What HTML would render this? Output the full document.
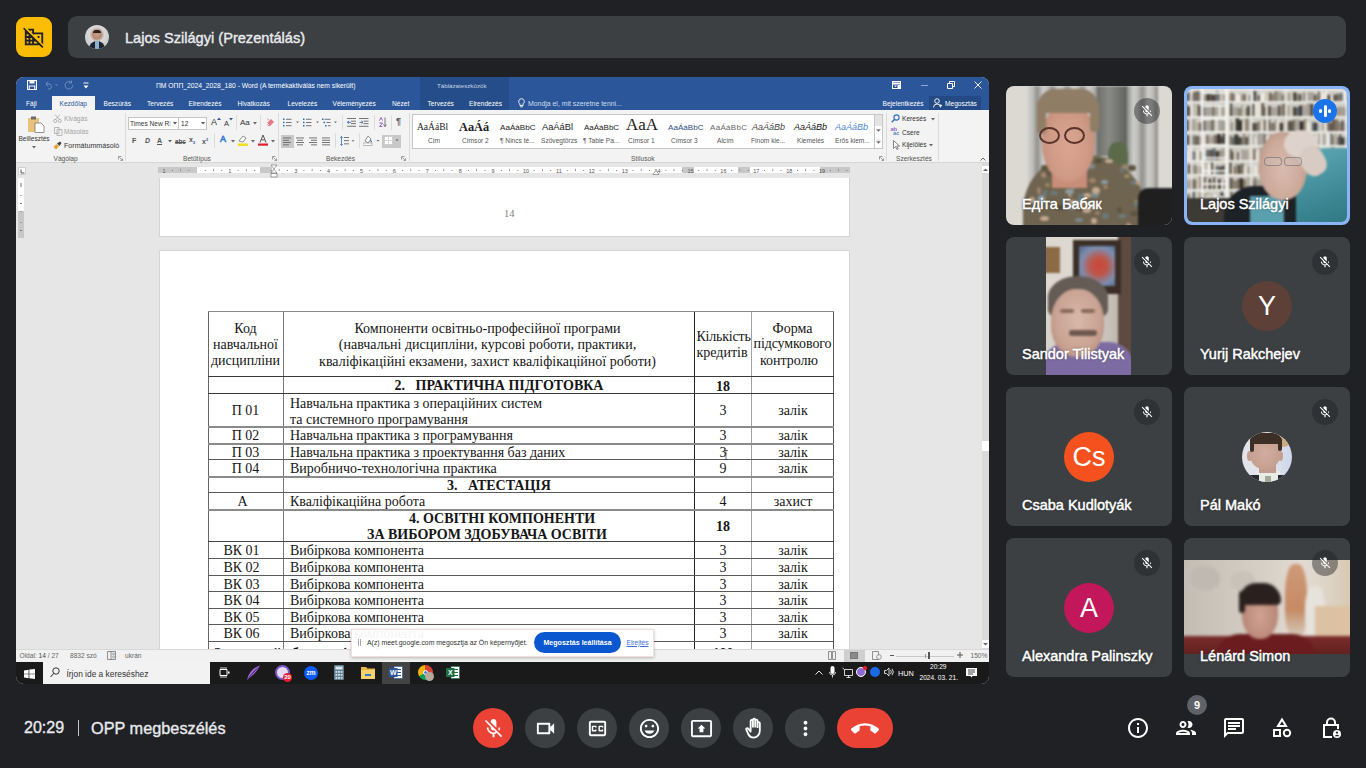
<!DOCTYPE html>
<html><head><meta charset="utf-8">
<style>
*{margin:0;padding:0;box-sizing:border-box}
html,body{width:1366px;height:768px;overflow:hidden;background:#202124;font-family:"Liberation Sans",sans-serif}
.a{position:absolute}
#ybox{left:16px;top:17px;width:36px;height:40px;background:#fbbc04;border-radius:9px}
#pbar{left:68px;top:16px;width:1278px;height:42px;background:#3c4043;border-radius:9px}
#pname{left:125px;top:30px;color:#e8eaed;font-size:14.6px;font-weight:normal;-webkit-text-stroke:0.4px #e8eaed;line-height:16px;white-space:nowrap}
#word{left:16px;top:77px;width:973px;height:607px;background:#e6e6e6;border-radius:8px 8px 8px 8px;overflow:hidden}
.wt{font-size:6.6px;line-height:8px;white-space:nowrap}
.rb{color:#333}
.rg{color:#555}
.ds{font-family:"Liberation Serif",serif;font-size:14px;line-height:16px;color:#161616;white-space:nowrap}
.st{font-family:"Liberation Serif",serif;color:#222;line-height:14px;white-space:nowrap}
.tile{width:166px;background:#3c4043;border-radius:8px;overflow:hidden}
.tname{position:absolute;color:#fff;font-size:14.5px;font-weight:normal;-webkit-text-stroke:0.45px #fff;left:16px;top:110px;line-height:16px;white-space:nowrap;text-shadow:0 0 3px rgba(0,0,0,.45)}
.mute{position:absolute;width:26px;height:26px;border-radius:50%;background:rgba(32,33,36,.45);right:12px;top:12px}
.mute svg{position:absolute;left:6px;top:6px;width:14px;height:14px}
.av{position:absolute;width:50px;height:50px;border-radius:50%;left:58px;top:44px;color:#fff;text-align:center;line-height:50px;font-size:27px}
.mbtn{position:absolute;top:708px;width:40px;height:40px;border-radius:20px;background:#3c4043}
.mbtn svg{position:absolute;left:8.5px;top:8.5px;width:23px;height:23px}
.ricon{position:absolute;top:716px;width:24px;height:24px}
</style></head><body>
<div id="ybox" class="a">
<svg class="a" style="left:7px;top:9px" width="22" height="22" viewBox="0 0 24 24"><path fill="#202124" d="M8 5h2v2h-.9L12 9.9V9h8v8.9l2 2V7H12V3H5.1L8 5.9zm8 6h2v2h-2zM1.3 1.8L.1 3.1 2 5v16h16l3 3 1.3-1.3L1.3 1.8zM6 19H4v-2h2v2zm0-4H4v-2h2v2zm0-4H4V9h2v2zm4 8H8v-2h2v2zm-2-4v-2h2v2H8zm4 4v-2h2l2 2h-4z"/></svg>
</div>
<div id="pbar" class="a">
<div class="a" style="left:17px;top:9px;width:24px;height:24px;border-radius:50%;background:radial-gradient(circle at 50% 40%,#c9a089 0,#b68a74 22%,#d9d9d9 40%,#cfcfcf 60%);overflow:hidden">
<div class="a" style="left:4px;top:16px;width:16px;height:10px;border-radius:8px 8px 0 0;background:#1f2530"></div>
<div class="a" style="left:10px;top:16px;width:4px;height:8px;background:#8fb1d0"></div>
<div class="a" style="left:8px;top:5px;width:8px;height:3px;border-radius:4px 4px 0 0;background:#2a2220"></div>
</div>
</div>
<div id="pname" class="a">Lajos Szilágyi (Prezentálás)</div>

<div id="word" class="a"><div class="a" id="wg" style="left:-16px;top:-77px;width:1366px;height:768px">
<!-- title + tabs -->
<div class="a" style="left:16px;top:77px;width:973px;height:33px;background:#2b579a"></div>
<div class="a" style="left:420px;top:77px;width:89px;height:33px;background:#254d89"></div>
<div class="a wt" style="left:156px;top:82px;font-size:6.75px;color:#fff">ПМ ОПП_2024_2028_180 - Word (A termékaktiválás nem sikerült)</div>
<div class="a wt" style="left:437px;top:82px;font-size:6.2px;color:#c5d3e8">Táblázateszközök</div>
<!-- QAT -->
<svg class="a" style="left:27px;top:80px" width="10" height="10" viewBox="0 0 10 10"><path d="M0.5 0.5h9v9h-9z" fill="none" stroke="#fff" stroke-width="1.2"/><rect x="2.5" y="0.5" width="5" height="3" fill="#fff"/><rect x="2.3" y="6" width="5.4" height="3.5" fill="none" stroke="#fff" stroke-width="1"/></svg>
<svg class="a" style="left:44px;top:80px" width="16" height="10" viewBox="0 0 16 10"><path d="M2 4h4a3 3 0 0 1 0 5H4 M2 4l2-2.5 M2 4l2 2.5" fill="none" stroke="#6d8cbf" stroke-width="1"/><path d="M11 4.5l1.5 1.5 1.5-1.5" fill="#6d8cbf"/></svg>
<svg class="a" style="left:64px;top:80px" width="10" height="10" viewBox="0 0 10 10"><path d="M7.5 2.5A3.8 3.8 0 1 0 8.7 5 M7.5 0.5v2.5h-2.5" fill="none" stroke="#6d8cbf" stroke-width="1"/></svg>
<svg class="a" style="left:83px;top:82px" width="6" height="8" viewBox="0 0 6 8"><path d="M0.5 1h5" stroke="#fff" stroke-width="1"/><path d="M0.5 3.5h5l-2.5 3z" fill="#fff"/></svg>
<!-- window buttons -->
<svg class="a" style="left:892px;top:81px" width="9" height="8" viewBox="0 0 9 8"><rect x="0.5" y="0.5" width="8" height="7" fill="none" stroke="#fff" stroke-width="1"/><path d="M1 1.5h7v2h-7z M2 4.5l1.5 1.5 1.5-1.5z M5.5 4h2.5v3h-2.5z" fill="#fff"/></svg>
<div class="a" style="left:921px;top:85px;width:7px;height:1px;background:#8ea8d2"></div>
<svg class="a" style="left:947px;top:81px" width="8" height="8" viewBox="0 0 8 8"><path d="M0.5 2.5h5v5h-5z M2.5 2.5V0.5h5v5h-2" fill="none" stroke="#fff" stroke-width="1"/></svg>
<svg class="a" style="left:974px;top:81px" width="8" height="8" viewBox="0 0 8 8"><path d="M0.5 0.5l7 7 M7.5 0.5l-7 7" stroke="#fff" stroke-width="0.9"/></svg>
<!-- tabs -->
<div class="a" style="left:51.5px;top:96px;width:43.5px;height:14px;background:#f3f3f3"></div>
<div class="a" style="left:929px;top:96px;width:52px;height:14px;background:#234a85"></div>
<div class="a wt" style="left:26px;top:99.5px;color:#fff">Fájl</div>
<div class="a wt" style="left:59.5px;top:99.5px;color:#2b579a">Kezdőlap</div>
<div class="a wt" style="left:103.5px;top:99.5px;color:#fff">Beszúrás</div>
<div class="a wt" style="left:147px;top:99.5px;color:#fff">Tervezés</div>
<div class="a wt" style="left:188.5px;top:99.5px;color:#fff">Elrendezés</div>
<div class="a wt" style="left:237.5px;top:99.5px;color:#fff">Hivatkozás</div>
<div class="a wt" style="left:287.5px;top:99.5px;color:#fff">Levelezés</div>
<div class="a wt" style="left:332.5px;top:99.5px;color:#fff">Véleményezés</div>
<div class="a wt" style="left:392px;top:99.5px;color:#fff">Nézet</div>
<div class="a wt" style="left:427.5px;top:99.5px;color:#fff">Tervezés</div>
<div class="a wt" style="left:469px;top:99.5px;color:#fff">Elrendezés</div>
<svg class="a" style="left:518px;top:98px" width="7" height="10" viewBox="0 0 7 10"><path d="M3.5 0.7a2.8 2.8 0 0 0-1.6 5.1v1.7h3.2V5.8A2.8 2.8 0 0 0 3.5 0.7z M2.2 8.8h2.6" fill="none" stroke="#fff" stroke-width="0.9"/></svg>
<div class="a wt" style="left:528px;top:99.5px;color:#d0dcee;font-size:6.9px">Mondja el, mit szeretne tenni...</div>
<div class="a wt" style="left:882.5px;top:99.5px;color:#fff">Bejelentkezés</div>
<svg class="a" style="left:933px;top:98px" width="9" height="10" viewBox="0 0 9 10"><circle cx="4" cy="3" r="2.3" fill="none" stroke="#fff" stroke-width="0.9"/><path d="M0.5 9.5a3.5 3.5 0 0 1 7 0 M6.5 7.5h2.5 M7.75 6.3v2.5" fill="none" stroke="#fff" stroke-width="0.9"/></svg>
<div class="a wt" style="left:945px;top:99.5px;color:#fff">Megosztás</div>

<!-- ribbon -->
<div class="a" style="left:16px;top:110px;width:973px;height:53px;background:#f3f3f3;border-bottom:1px solid #d6d6d6"></div>
<!-- Clipboard group -->
<svg class="a" style="left:27px;top:115px" width="18" height="18" viewBox="0 0 18 18"><path d="M1 3h11v14H1z" fill="#e8c27a"/><path d="M4 1.5h5v3H4z" fill="#6b6b6b"/><path d="M8 8h6l3 3v6.5H8z" fill="#fff" stroke="#777" stroke-width="0.8"/></svg>
<div class="a wt rb" style="left:18.5px;top:134.5px;font-size:6.5px">Beillesztés</div>
<svg class="a" style="left:32px;top:146px" width="4" height="3" viewBox="0 0 4 3"><path d="M0 0h4l-2 2.5z" fill="#666"/></svg>
<svg class="a" style="left:53px;top:114px" width="9" height="9" viewBox="0 0 9 9"><circle cx="2.2" cy="7" r="1.6" fill="none" stroke="#aaa" stroke-width="0.8"/><circle cx="6.8" cy="7" r="1.6" fill="none" stroke="#aaa" stroke-width="0.8"/><path d="M2 0.5l5 5.5 M7 0.5l-5 5.5" stroke="#aaa" stroke-width="0.8"/></svg>
<div class="a wt" style="left:64px;top:115px;color:#a3a3a3">Kivágás</div>
<svg class="a" style="left:54px;top:127px" width="9" height="9" viewBox="0 0 9 9"><path d="M0.5 0.5h4.5v6h-4.5z M3 2.5h5v6H3z" fill="#f3f3f3" stroke="#aaa" stroke-width="0.8"/></svg>
<div class="a wt" style="left:64px;top:128px;color:#a3a3a3">Másolás</div>
<svg class="a" style="left:53px;top:141px" width="9" height="9" viewBox="0 0 9 9"><path d="M0.5 6l3-3 2.5 2.5-3 3z" fill="#e4a23a"/><path d="M4 2.5l3-2 1.5 1.5-2 3z" fill="#444"/></svg>
<div class="a wt rb" style="left:64px;top:141.5px;font-size:7.1px">Formátummásoló</div>
<div class="a wt rg" style="left:53.5px;top:155px">Vágólap</div>
<svg class="a" style="left:118px;top:156px" width="5" height="5" viewBox="0 0 5 5"><path d="M0.5 0.5h3 M0.5 0.5v3 M1.5 1.5l3 3 M4.5 2.5v2h-2" fill="none" stroke="#777" stroke-width="0.7"/></svg>
<div class="a" style="left:125px;top:113px;width:1px;height:48px;background:#dcdcdc"></div>

<!-- Font group -->
<div class="a" style="left:128px;top:117px;width:51px;height:13px;background:#fff;border:1px solid #c6c6c6"></div>
<div class="a wt rb" style="left:130px;top:119.5px;font-size:6.6px;color:#333">Times New R<span style="color:#999">i</span></div>
<svg class="a" style="left:173px;top:122px" width="4" height="3" viewBox="0 0 4 3"><path d="M0 0h4l-2 2.5z" fill="#555"/></svg>
<div class="a" style="left:178px;top:117px;width:29px;height:13px;background:#fff;border:1px solid #c6c6c6"></div>
<div class="a wt rb" style="left:181px;top:119.5px;font-size:6.6px;color:#333">12</div>
<svg class="a" style="left:201px;top:122px" width="4" height="3" viewBox="0 0 4 3"><path d="M0 0h4l-2 2.5z" fill="#555"/></svg>
<div class="a wt rb" style="left:211px;top:118px;font-size:9px">A</div><svg class="a" style="left:217px;top:117px" width="4" height="3" viewBox="0 0 4 3"><path d="M0 3h4l-2-2.5z" fill="#2b579a"/></svg>
<div class="a wt rb" style="left:224px;top:120px;font-size:7.5px">A</div><svg class="a" style="left:229px;top:118px" width="4" height="3" viewBox="0 0 4 3"><path d="M0 0h4l-2 2.5z" fill="#2b579a"/></svg>
<div class="a" style="left:236px;top:115px;width:1px;height:15px;background:#dcdcdc"></div>
<div class="a wt rb" style="left:240px;top:119px;font-size:8px">Aa</div>
<svg class="a" style="left:253px;top:122px" width="4" height="3" viewBox="0 0 4 3"><path d="M0 0h4l-2 2.5z" fill="#666"/></svg>
<div class="a" style="left:260px;top:115px;width:1px;height:15px;background:#dcdcdc"></div>
<svg class="a" style="left:266px;top:118px" width="9" height="9" viewBox="0 0 9 9"><path d="M1 5l4-4 3 3-4 4H2z" fill="#e8778a"/><path d="M1 5l2 2" stroke="#fff" stroke-width="0.8"/><path d="M1.5 0.5l1 1.5" stroke="#666" stroke-width="0.6"/></svg>
<div class="a wt" style="left:132px;top:137px;font-size:7px;font-weight:bold;color:#555">F</div>
<div class="a wt" style="left:145px;top:137px;font-size:7px;font-weight:bold;font-style:italic;color:#555">D</div>
<div class="a wt" style="left:157px;top:137px;font-size:7px;font-weight:bold;color:#555;text-decoration:underline">A</div>
<svg class="a" style="left:168px;top:140px" width="4" height="3" viewBox="0 0 4 3"><path d="M0 0h4l-2 2.5z" fill="#666"/></svg>
<div class="a wt" style="left:175px;top:137.5px;font-size:6.3px;font-weight:bold;color:#555;text-decoration:line-through">abc</div>
<div class="a wt" style="left:189px;top:136px;font-size:7px;font-weight:bold;color:#555">x<sub style="font-size:4px;color:#2b579a">2</sub></div>
<div class="a wt" style="left:202px;top:136px;font-size:7px;font-weight:bold;color:#555">x<sup style="font-size:4px;color:#2b579a">2</sup></div>
<div class="a" style="left:214px;top:133px;width:1px;height:15px;background:#dcdcdc"></div>
<div class="a wt" style="left:220px;top:134.5px;font-size:9px;color:#fff;-webkit-text-stroke:0.7px #3a7bd5">A</div>
<svg class="a" style="left:231px;top:140px" width="4" height="3" viewBox="0 0 4 3"><path d="M0 0h4l-2 2.5z" fill="#666"/></svg>
<svg class="a" style="left:238px;top:135px" width="10" height="11" viewBox="0 0 10 11"><path d="M1 6l4-5 3 2-3 4z" fill="#fff" stroke="#666" stroke-width="0.7"/><rect x="0" y="8.5" width="10" height="2.5" fill="#f0e020"/></svg>
<svg class="a" style="left:251px;top:140px" width="4" height="3" viewBox="0 0 4 3"><path d="M0 0h4l-2 2.5z" fill="#666"/></svg>
<svg class="a" style="left:258px;top:134px" width="10" height="12" viewBox="0 0 10 12"><path d="M2 8.5L5 1l3 7.5 M3.2 5.8h3.6" fill="none" stroke="#555" stroke-width="1"/><rect x="0" y="9.5" width="10" height="2.2" fill="#e0202a"/></svg>
<svg class="a" style="left:271px;top:140px" width="4" height="3" viewBox="0 0 4 3"><path d="M0 0h4l-2 2.5z" fill="#666"/></svg>
<div class="a wt rg" style="left:183px;top:155px">Betűtípus</div>
<svg class="a" style="left:272px;top:156px" width="5" height="5" viewBox="0 0 5 5"><path d="M0.5 0.5h3 M0.5 0.5v3 M1.5 1.5l3 3 M4.5 2.5v2h-2" fill="none" stroke="#777" stroke-width="0.7"/></svg>
<div class="a" style="left:278px;top:113px;width:1px;height:48px;background:#dcdcdc"></div>

<!-- Paragraph group -->
<svg class="a" style="left:283px;top:118px" width="60" height="9" viewBox="0 0 60 9"><g fill="#2b6cc4"><rect x="0" y="0.5" width="1.5" height="1.5"/><rect x="0" y="3.7" width="1.5" height="1.5"/><rect x="0" y="7" width="1.5" height="1.5"/><rect x="20" y="0.5" width="1.5" height="1.5"/><rect x="20" y="3.7" width="1.5" height="1.5"/><rect x="20" y="7" width="1.5" height="1.5"/><rect x="39" y="0.5" width="1.5" height="1.5"/><rect x="40.5" y="3.7" width="1.5" height="1.5"/><rect x="42" y="7" width="1.5" height="1.5"/></g><g fill="#666"><rect x="3" y="0.8" width="5.5" height="0.9"/><rect x="3" y="4" width="5.5" height="0.9"/><rect x="3" y="7.3" width="5.5" height="0.9"/><rect x="23" y="0.8" width="5.5" height="0.9"/><rect x="23" y="4" width="5.5" height="0.9"/><rect x="23" y="7.3" width="5.5" height="0.9"/><rect x="41.5" y="0.8" width="6" height="0.9"/><rect x="43.5" y="4" width="4" height="0.9"/><rect x="45" y="7.3" width="2.5" height="0.9"/><path d="M13 3.5h3l-1.5 1.5z M33 3.5h3l-1.5 1.5z M51 3.5h3l-1.5 1.5z"/></g></svg>
<div class="a" style="left:342px;top:115px;width:1px;height:15px;background:#dcdcdc"></div>
<svg class="a" style="left:347px;top:118px" width="23" height="9" viewBox="0 0 23 9"><g fill="#666"><rect x="0" y="0" width="9" height="0.9"/><rect x="4" y="2.7" width="5" height="0.9"/><rect x="4" y="5.2" width="5" height="0.9"/><rect x="0" y="7.8" width="9" height="0.9"/><rect x="12" y="0" width="9.5" height="0.9"/><rect x="16.5" y="2.7" width="5" height="0.9"/><rect x="16.5" y="5.2" width="5" height="0.9"/><rect x="12" y="7.8" width="9.5" height="0.9"/></g><path d="M0.5 4.3h3.5 M0.5 4.3l1.5-1.3 M0.5 4.3l1.5 1.3 M12.5 4.3h3.5 M16 4.3l-1.5-1.3 M16 4.3l-1.5 1.3" stroke="#2b6cc4" stroke-width="0.9" fill="none"/></svg>
<div class="a" style="left:374px;top:115px;width:1px;height:15px;background:#dcdcdc"></div>
<svg class="a" style="left:379px;top:117px" width="8" height="10" viewBox="0 0 8 10"><path d="M0.5 3.5l1.5-3 1.5 3 M0.5 6h3l-3 3.5h3" fill="none" stroke="#7b3fb5" stroke-width="0.8"/><path d="M6 0.5v9 M4.5 7.5l1.5 2 1.5-2" fill="none" stroke="#555" stroke-width="0.8"/></svg>
<div class="a" style="left:391px;top:115px;width:1px;height:15px;background:#dcdcdc"></div>
<div class="a wt" style="left:396px;top:116.5px;font-size:9px;color:#555;font-weight:bold">¶</div>
<div class="a" style="left:281px;top:135px;width:13px;height:13px;background:#c8c8c8"></div>
<svg class="a" style="left:283px;top:137px" width="50" height="9" viewBox="0 0 50 9"><g fill="#666"><rect x="0" y="0.5" width="8" height="0.9"/><rect x="0" y="2.8" width="6" height="0.9"/><rect x="0" y="5.1" width="8" height="0.9"/><rect x="0" y="7.4" width="6" height="0.9"/><rect x="13" y="0.5" width="8" height="0.9"/><rect x="14" y="2.8" width="6" height="0.9"/><rect x="13" y="5.1" width="8" height="0.9"/><rect x="14" y="7.4" width="6" height="0.9"/><rect x="26" y="0.5" width="8" height="0.9"/><rect x="28" y="2.8" width="6" height="0.9"/><rect x="26" y="5.1" width="8" height="0.9"/><rect x="28" y="7.4" width="6" height="0.9"/><rect x="39" y="0.5" width="8" height="0.9"/><rect x="39" y="2.8" width="8" height="0.9"/><rect x="39" y="5.1" width="8" height="0.9"/><rect x="39" y="7.4" width="8" height="0.9"/></g></svg>
<div class="a" style="left:335px;top:133px;width:1px;height:15px;background:#dcdcdc"></div>
<svg class="a" style="left:340px;top:136px" width="16" height="10" viewBox="0 0 16 10"><path d="M1.5 0.5v9 M0.3 1.8l1.2-1.3 1.2 1.3 M0.3 8.2l1.2 1.3 1.2-1.3" fill="none" stroke="#2b6cc4" stroke-width="0.8"/><g fill="#666"><rect x="4" y="1" width="5" height="0.9"/><rect x="4" y="4.2" width="5" height="0.9"/><rect x="4" y="7.4" width="5" height="0.9"/><path d="M11.5 4.3h3l-1.5 1.5z"/></g></svg>
<div class="a" style="left:359px;top:133px;width:1px;height:15px;background:#dcdcdc"></div>
<svg class="a" style="left:363px;top:135px" width="18" height="11" viewBox="0 0 18 11"><path d="M2 6l3-5 3 3-3 4z" fill="#fff" stroke="#666" stroke-width="0.7"/><path d="M7 4.5l2 1.5-1 2" fill="#2b6cc4"/><rect x="0" y="8" width="9" height="2.5" fill="#fff" stroke="#888" stroke-width="0.6"/><path d="M13.5 5h3l-1.5 1.5z" fill="#666"/></svg>
<div class="a" style="left:382px;top:135px;width:19px;height:13px;background:#c8c8c8"></div>
<svg class="a" style="left:384px;top:136px" width="16" height="10" viewBox="0 0 16 10"><rect x="0.5" y="0.5" width="8" height="8" fill="#fff" stroke="#bbb" stroke-width="0.5"/><path d="M4.5 0.5v8 M0.5 4.5h8" stroke="#c8c8c8" stroke-width="0.7"/><path d="M11.5 3.5h3l-1.5 1.5z" fill="#555"/></svg>
<div class="a wt rg" style="left:326px;top:155px">Bekezdés</div>
<svg class="a" style="left:401px;top:156px" width="5" height="5" viewBox="0 0 5 5"><path d="M0.5 0.5h3 M0.5 0.5v3 M1.5 1.5l3 3 M4.5 2.5v2h-2" fill="none" stroke="#777" stroke-width="0.7"/></svg>
<div class="a" style="left:409px;top:113px;width:1px;height:48px;background:#dcdcdc"></div>

<!-- Styles gallery -->
<div class="a" style="left:412px;top:114px;width:471px;height:35px;background:#fff;border:1px solid #c6c6c6"></div>
<div class="a st" style="left:417px;top:120px;font-size:9.5px">AaÁáBl</div>
<div class="a st" style="left:459px;top:120px;font-size:12.3px;font-weight:bold">AaÁá</div>
<div class="a st" style="left:500px;top:121px;font-size:8.1px;font-family:'Liberation Sans',sans-serif">AaÁáBbC</div>
<div class="a st" style="left:542px;top:120px;font-size:9.3px;font-family:'Liberation Sans',sans-serif">AaÁáBl</div>
<div class="a st" style="left:584px;top:121px;font-size:8px;font-family:'Liberation Sans',sans-serif">AaÁáBbC</div>
<div class="a st" style="left:626px;top:118px;font-size:17px">AaA</div>
<div class="a st" style="left:668px;top:121px;font-size:8.1px;font-family:'Liberation Sans',sans-serif;color:#2f4f7f">AaÁáBbC</div>
<div class="a st" style="left:710px;top:121px;font-size:8px;font-family:'Liberation Sans',sans-serif;color:#666;letter-spacing:0.3px">AaÁáBbC</div>
<div class="a st" style="left:752px;top:120px;font-size:9px;font-family:'Liberation Sans',sans-serif;font-style:italic;color:#444">AaÁáBb</div>
<div class="a st" style="left:794px;top:120px;font-size:9px;font-family:'Liberation Sans',sans-serif;font-style:italic;color:#111">AaÁáBb</div>
<div class="a st" style="left:835px;top:120px;font-size:9px;font-family:'Liberation Sans',sans-serif;font-style:italic;color:#4a86d0">AaÁáBb</div>
<div class="a wt rg" style="left:428px;top:137px">Cím</div>
<div class="a wt rg" style="left:462px;top:137px">Címsor 2</div>
<div class="a wt rg" style="left:500px;top:137px">¶ Nincs té...</div>
<div class="a wt rg" style="left:541px;top:137px">Szövegtörzs</div>
<div class="a wt rg" style="left:583px;top:137px">¶ Table Pa...</div>
<div class="a wt rg" style="left:628px;top:137px">Címsor 1</div>
<div class="a wt rg" style="left:671px;top:137px">Címsor 3</div>
<div class="a wt rg" style="left:717px;top:137px">Alcím</div>
<div class="a wt rg" style="left:751px;top:137px">Finom kie...</div>
<div class="a wt rg" style="left:797px;top:137px">Kiemelés</div>
<div class="a wt rg" style="left:835px;top:137px">Erős kiem...</div>
<div class="a" style="left:874px;top:114px;width:9px;height:35px;background:#fff;border:1px solid #c6c6c6"></div>
<div class="a" style="left:875px;top:115px;width:7px;height:11px;background:#e4e4e4"></div>
<svg class="a" style="left:876px;top:128px" width="5" height="20" viewBox="0 0 5 20"><path d="M0.5 1.5h4l-2 2z M0.5 12h4 M0.5 13.5h4l-2 2z" fill="#666" stroke="#666" stroke-width="0.3"/></svg>
<div class="a wt rg" style="left:631px;top:155px">Stílusok</div>
<svg class="a" style="left:879px;top:156px" width="5" height="5" viewBox="0 0 5 5"><path d="M0.5 0.5h3 M0.5 0.5v3 M1.5 1.5l3 3 M4.5 2.5v2h-2" fill="none" stroke="#777" stroke-width="0.7"/></svg>
<div class="a" style="left:886px;top:113px;width:1px;height:48px;background:#dcdcdc"></div>

<!-- Editing group -->
<svg class="a" style="left:891px;top:114px" width="9" height="9" viewBox="0 0 9 9"><circle cx="5.5" cy="3.5" r="2.6" fill="none" stroke="#2b6cc4" stroke-width="1.1"/><path d="M3.5 5.5L0.7 8.3" stroke="#2b6cc4" stroke-width="1.3"/></svg>
<div class="a wt rb" style="left:902px;top:115px">Keresés</div>
<svg class="a" style="left:931px;top:118px" width="4" height="3" viewBox="0 0 4 3"><path d="M0 0h4l-2 2.5z" fill="#666"/></svg>
<div class="a wt" style="left:890.5px;top:126px;font-size:6px;color:#7b3fb5;line-height:6px">ab</div>
<div class="a wt" style="left:893px;top:130px;font-size:6px;color:#2b6cc4;line-height:6px">ac</div>
<div class="a wt rb" style="left:902px;top:128.5px">Csere</div>
<svg class="a" style="left:893px;top:140px" width="7" height="10" viewBox="0 0 7 10"><path d="M0.5 0.5v8l2-2 1.5 3 1.2-0.5-1.5-3h2.8z" fill="#fff" stroke="#555" stroke-width="0.7"/></svg>
<div class="a wt rb" style="left:902px;top:141px">Kijelölés</div>
<svg class="a" style="left:929px;top:144px" width="4" height="3" viewBox="0 0 4 3"><path d="M0 0h4l-2 2.5z" fill="#666"/></svg>
<div class="a wt rg" style="left:896px;top:155px">Szerkesztés</div>
<div class="a" style="left:938px;top:113px;width:1px;height:48px;background:#dcdcdc"></div>
<svg class="a" style="left:980px;top:157px" width="6" height="4" viewBox="0 0 6 4"><path d="M0.5 3.5L3 1l2.5 2.5" fill="none" stroke="#555" stroke-width="0.9"/></svg>

<!-- ruler -->
<div class="a" style="left:17.5px;top:166.5px;width:8.5px;height:8px;background:#fff;border:1px solid #d0d0d0"></div>
<svg class="a" style="left:19.5px;top:168.5px" width="5" height="5" viewBox="0 0 5 5"><path d="M1 0.5v3.5h3.5" fill="none" stroke="#444" stroke-width="0.9"/></svg>
<div class="a" style="left:158px;top:167px;width:692px;height:6px;background:#fff"></div>
<div class="a" style="left:158px;top:167px;width:39px;height:6px;background:#c8c8c8"></div>
<div class="a" style="left:260px;top:167px;width:12px;height:6px;background:#c8c8c8"></div>
<div class="a" style="left:682px;top:167px;width:12px;height:6px;background:#c8c8c8"></div>
<div class="a" style="left:738px;top:167px;width:12px;height:6px;background:#c8c8c8"></div>
<div class="a" style="left:820px;top:167px;width:30px;height:6px;background:#c8c8c8"></div>
<svg class="a" style="left:150px;top:166px" width="700" height="12" viewBox="0 0 700 12" font-family="Liberation Sans" font-size="5.5" fill="#555">
<text x="14.1" y="6.6" text-anchor="middle">1</text>
<rect x="21.9" y="4" width="0.9" height="0.9" fill="#666"/>
<rect x="30.1" y="2.8" width="0.8" height="2.4" fill="#888"/>
<rect x="38.4" y="4" width="0.9" height="0.9" fill="#666"/>
<rect x="54.8" y="4" width="0.9" height="0.9" fill="#666"/>
<rect x="63.0" y="2.8" width="0.8" height="2.4" fill="#888"/>
<rect x="71.3" y="4" width="0.9" height="0.9" fill="#666"/>
<text x="79.9" y="6.6" text-anchor="middle">1</text>
<rect x="87.7" y="4" width="0.9" height="0.9" fill="#666"/>
<rect x="95.9" y="2.8" width="0.8" height="2.4" fill="#888"/>
<rect x="104.2" y="4" width="0.9" height="0.9" fill="#666"/>

<rect x="120.6" y="4" width="0.9" height="0.9" fill="#666"/>
<rect x="128.8" y="2.8" width="0.8" height="2.4" fill="#888"/>
<rect x="137.1" y="4" width="0.9" height="0.9" fill="#666"/>
<text x="145.7" y="6.6" text-anchor="middle">3</text>
<rect x="153.5" y="4" width="0.9" height="0.9" fill="#666"/>
<rect x="161.7" y="2.8" width="0.8" height="2.4" fill="#888"/>
<rect x="170.0" y="4" width="0.9" height="0.9" fill="#666"/>
<text x="178.6" y="6.6" text-anchor="middle">4</text>
<rect x="186.4" y="4" width="0.9" height="0.9" fill="#666"/>
<rect x="194.7" y="2.8" width="0.8" height="2.4" fill="#888"/>
<rect x="202.9" y="4" width="0.9" height="0.9" fill="#666"/>
<text x="211.5" y="6.6" text-anchor="middle">5</text>
<rect x="219.3" y="4" width="0.9" height="0.9" fill="#666"/>
<rect x="227.5" y="2.8" width="0.8" height="2.4" fill="#888"/>
<rect x="235.8" y="4" width="0.9" height="0.9" fill="#666"/>
<text x="244.4" y="6.6" text-anchor="middle">6</text>
<rect x="252.2" y="4" width="0.9" height="0.9" fill="#666"/>
<rect x="260.4" y="2.8" width="0.8" height="2.4" fill="#888"/>
<rect x="268.7" y="4" width="0.9" height="0.9" fill="#666"/>
<text x="277.3" y="6.6" text-anchor="middle">7</text>
<rect x="285.1" y="4" width="0.9" height="0.9" fill="#666"/>
<rect x="293.3" y="2.8" width="0.8" height="2.4" fill="#888"/>
<rect x="301.6" y="4" width="0.9" height="0.9" fill="#666"/>
<text x="310.2" y="6.6" text-anchor="middle">8</text>
<rect x="318.0" y="4" width="0.9" height="0.9" fill="#666"/>
<rect x="326.2" y="2.8" width="0.8" height="2.4" fill="#888"/>
<rect x="334.5" y="4" width="0.9" height="0.9" fill="#666"/>
<text x="343.1" y="6.6" text-anchor="middle">9</text>
<rect x="350.9" y="4" width="0.9" height="0.9" fill="#666"/>
<rect x="359.1" y="2.8" width="0.8" height="2.4" fill="#888"/>
<rect x="367.4" y="4" width="0.9" height="0.9" fill="#666"/>
<text x="376.0" y="6.6" text-anchor="middle">10</text>
<rect x="383.8" y="4" width="0.9" height="0.9" fill="#666"/>
<rect x="392.1" y="2.8" width="0.8" height="2.4" fill="#888"/>
<rect x="400.3" y="4" width="0.9" height="0.9" fill="#666"/>
<text x="408.9" y="6.6" text-anchor="middle">11</text>
<rect x="416.7" y="4" width="0.9" height="0.9" fill="#666"/>
<rect x="425.0" y="2.8" width="0.8" height="2.4" fill="#888"/>
<rect x="433.2" y="4" width="0.9" height="0.9" fill="#666"/>
<text x="441.8" y="6.6" text-anchor="middle">12</text>
<rect x="449.6" y="4" width="0.9" height="0.9" fill="#666"/>
<rect x="457.9" y="2.8" width="0.8" height="2.4" fill="#888"/>
<rect x="466.1" y="4" width="0.9" height="0.9" fill="#666"/>
<text x="474.7" y="6.6" text-anchor="middle">13</text>
<rect x="482.5" y="4" width="0.9" height="0.9" fill="#666"/>
<rect x="490.8" y="2.8" width="0.8" height="2.4" fill="#888"/>
<rect x="499.0" y="4" width="0.9" height="0.9" fill="#666"/>
<text x="507.6" y="6.6" text-anchor="middle">14</text>
<rect x="515.4" y="4" width="0.9" height="0.9" fill="#666"/>
<rect x="523.6" y="2.8" width="0.8" height="2.4" fill="#888"/>
<rect x="531.9" y="4" width="0.9" height="0.9" fill="#666"/>
<text x="540.5" y="6.6" text-anchor="middle">15</text>
<rect x="548.3" y="4" width="0.9" height="0.9" fill="#666"/>
<rect x="556.6" y="2.8" width="0.8" height="2.4" fill="#888"/>
<rect x="564.8" y="4" width="0.9" height="0.9" fill="#666"/>
<text x="573.4" y="6.6" text-anchor="middle">16</text>
<rect x="581.2" y="4" width="0.9" height="0.9" fill="#666"/>
<rect x="589.5" y="2.8" width="0.8" height="2.4" fill="#888"/>
<rect x="597.7" y="4" width="0.9" height="0.9" fill="#666"/>
<text x="606.3" y="6.6" text-anchor="middle">17</text>
<rect x="614.1" y="4" width="0.9" height="0.9" fill="#666"/>
<rect x="622.4" y="2.8" width="0.8" height="2.4" fill="#888"/>
<rect x="630.6" y="4" width="0.9" height="0.9" fill="#666"/>
<text x="639.2" y="6.6" text-anchor="middle">18</text>
<rect x="647.0" y="4" width="0.9" height="0.9" fill="#666"/>
<rect x="655.2" y="2.8" width="0.8" height="2.4" fill="#888"/>
<rect x="663.5" y="4" width="0.9" height="0.9" fill="#666"/>
<text x="672.1" y="6.6" text-anchor="middle">19</text>
<rect x="679.9" y="4" width="0.9" height="0.9" fill="#666"/>
<rect x="688.2" y="2.8" width="0.8" height="2.4" fill="#888"/>
<rect x="696.4" y="4" width="0.9" height="0.9" fill="#666"/>
</svg>
<svg class="a" style="left:270px;top:164px" width="8" height="14" viewBox="0 0 8 14"><path d="M1 1h6l-3 4z M1 9h6l-3-4z" fill="#fff" stroke="#666" stroke-width="0.6"/><rect x="1" y="9.5" width="6" height="3.5" fill="#fff" stroke="#666" stroke-width="0.6"/></svg>
<svg class="a" style="left:652px;top:169px" width="8" height="6" viewBox="0 0 8 6"><path d="M1 5.5h6l-3-4z" fill="#fff" stroke="#666" stroke-width="0.6"/></svg>

<!-- document -->
<div class="a" style="left:16px;top:178px;width:966px;height:471px;background:#e6e6e6"></div>
<div class="a" style="left:18px;top:178px;width:6px;height:33px;background:#fff"></div>
<div class="a" style="left:18px;top:211px;width:6px;height:27px;background:#c8c8c8"></div>
<svg class="a" style="left:18px;top:178px" width="6" height="60" viewBox="0 0 6 60"><g fill="#777"><rect x="2.5" y="5" width="1" height="4"/><rect x="2.5" y="17" width="1" height="1"/><rect x="2" y="25" width="2" height="1"/><rect x="2.5" y="33" width="1" height="1"/><rect x="2.5" y="44" width="1" height="1"/><rect x="2" y="52" width="2" height="1"/></g></svg>

<div class="a" style="left:159px;top:178px;width:691px;height:58.5px;background:#fff;border:1px solid #d4d4d4;border-top:none"></div>
<div class="a" style="left:159px;top:249.5px;width:691px;height:410px;background:#fff;border:1px solid #d4d4d4"></div>
<div class="a ds" style="left:504px;top:205.8px;font-size:10.5px;color:#808080">14</div>
<div class="a" style="left:982px;top:163px;width:7px;height:486px;background:#dadada"></div>
<div class="a" style="left:982px;top:166px;width:7px;height:7px;background:#fff"></div>
<svg class="a" style="left:983px;top:168px" width="5" height="3" viewBox="0 0 5 3"><path d="M0 3h5l-2.5-2.5z" fill="#666"/></svg>
<div class="a" style="left:982px;top:441px;width:7px;height:10px;background:#fff"></div>
<div class="a" style="left:982px;top:640px;width:7px;height:8px;background:#fff"></div>
<svg class="a" style="left:983px;top:643px" width="5" height="3" viewBox="0 0 5 3"><path d="M0 0h5l-2.5 2.5z" fill="#666"/></svg>
<div class="a" style="left:208px;top:311px;width:1px;height:349px;background:#666"></div>
<div class="a" style="left:283px;top:311px;width:1px;height:349px;background:#777"></div>
<div class="a" style="left:694px;top:311px;width:1px;height:349px;background:#222"></div>
<div class="a" style="left:751px;top:311px;width:1px;height:349px;background:#a0a0a0"></div>
<div class="a" style="left:833px;top:311px;width:1px;height:349px;background:#555"></div>
<div class="a" style="left:208px;top:311px;width:626px;height:1px;background:#8a8a8a"></div>
<div class="a" style="left:208px;top:376px;width:626px;height:1px;background:#3a3a3a"></div>
<div class="a" style="left:208px;top:393px;width:626px;height:1px;background:#3a3a3a"></div>
<div class="a" style="left:208px;top:426px;width:626px;height:1.5px;background:#8a8a8a"></div>
<div class="a" style="left:208px;top:443px;width:626px;height:1.5px;background:#8a8a8a"></div>
<div class="a" style="left:208px;top:459px;width:626px;height:1px;background:#5a5a5a"></div>
<div class="a" style="left:208px;top:476px;width:626px;height:1.5px;background:#8a8a8a"></div>
<div class="a" style="left:208px;top:492px;width:626px;height:1px;background:#5a5a5a"></div>
<div class="a" style="left:208px;top:509px;width:626px;height:1.5px;background:#8a8a8a"></div>
<div class="a" style="left:208px;top:541px;width:626px;height:1px;background:#444"></div>
<div class="a" style="left:208px;top:558px;width:626px;height:1px;background:#5a5a5a"></div>
<div class="a" style="left:208px;top:575px;width:626px;height:1px;background:#5a5a5a"></div>
<div class="a" style="left:208px;top:591px;width:626px;height:1px;background:#5a5a5a"></div>
<div class="a" style="left:208px;top:608px;width:626px;height:1px;background:#5a5a5a"></div>
<div class="a" style="left:208px;top:624px;width:626px;height:1px;background:#5a5a5a"></div>
<div class="a" style="left:208px;top:641px;width:626px;height:1px;background:#5a5a5a"></div>
<div class="a ds" style="left:-54.5px;width:600px;text-align:center;top:320.9px;">Код</div>
<div class="a ds" style="left:-54.5px;width:600px;text-align:center;top:336.9px;">навчальної</div>
<div class="a ds" style="left:-54.5px;width:600px;text-align:center;top:353.3px;">дисципліни</div>
<div class="a ds" style="left:187.5px;width:600px;text-align:center;top:320.9px;">Компоненти освітньо-професійної програми</div>
<div class="a ds" style="left:187.5px;width:600px;text-align:center;top:336.9px;">(навчальні дисципліни, курсові роботи, практики,</div>
<div class="a ds" style="left:187.5px;width:600px;text-align:center;top:353.5px;">кваліфікаційні екзамени, захист кваліфікаційної роботи)</div>
<div class="a ds" style="left:423.5px;width:600px;text-align:center;top:329.4px;letter-spacing:-0.2px">Кількість</div>
<div class="a ds" style="left:422px;width:600px;text-align:center;top:345.1px;">кредитів</div>
<div class="a ds" style="left:492.5px;width:600px;text-align:center;top:321.1px;">Форма</div>
<div class="a ds" style="left:492.5px;width:600px;text-align:center;top:336.4px;letter-spacing:-0.1px">підсумкового</div>
<div class="a ds" style="left:489px;width:600px;text-align:center;top:352.7px;">контролю</div>
<div class="a ds" style="left:394.5px;top:378.4px;font-weight:bold">2.&nbsp;&nbsp; ПРАКТИЧНА ПІДГОТОВКА</div>
<div class="a ds" style="left:423px;width:600px;text-align:center;top:378.5px;font-weight:bold">18</div>
<div class="a ds" style="left:-54.5px;width:600px;text-align:center;top:403.3px;">П 01</div>
<div class="a ds" style="left:290px;top:396.1px;">Навчальна практика з операційних систем</div>
<div class="a ds" style="left:290px;top:411.6px;">та системного програмування</div>
<div class="a ds" style="left:423px;width:600px;text-align:center;top:403.1px;">3</div>
<div class="a ds" style="left:493px;width:600px;text-align:center;top:403.1px;">залік</div>
<div class="a ds" style="left:-54.5px;width:600px;text-align:center;top:428.4px;">П 02</div>
<div class="a ds" style="left:290px;top:428.4px;">Навчальна практика з програмування</div>
<div class="a ds" style="left:423px;width:600px;text-align:center;top:428.4px;">3</div>
<div class="a ds" style="left:493px;width:600px;text-align:center;top:428.4px;">залік</div>
<div class="a ds" style="left:-54.5px;width:600px;text-align:center;top:445.1px;">П 03</div>
<div class="a ds" style="left:290px;top:445.1px;">Навчальна практика з проектування баз даних</div>
<div class="a ds" style="left:423px;width:600px;text-align:center;top:445.1px;">3</div>
<div class="a ds" style="left:493px;width:600px;text-align:center;top:445.1px;">залік</div>
<div class="a ds" style="left:-54.5px;width:600px;text-align:center;top:461.4px;">П 04</div>
<div class="a ds" style="left:290px;top:461.4px;">Виробничо-технологічна практика</div>
<div class="a ds" style="left:423px;width:600px;text-align:center;top:461.4px;">9</div>
<div class="a ds" style="left:493px;width:600px;text-align:center;top:461.4px;">залік</div>
<div class="a ds" style="left:447px;top:478.1px;font-weight:bold">3.&nbsp;&nbsp; АТЕСТАЦІЯ</div>
<div class="a ds" style="left:-57.5px;width:600px;text-align:center;top:494.4px;">А</div>
<div class="a ds" style="left:290px;top:494.4px;">Кваліфікаційна робота</div>
<div class="a ds" style="left:423px;width:600px;text-align:center;top:494.4px;">4</div>
<div class="a ds" style="left:493px;width:600px;text-align:center;top:494.4px;">захист</div>
<div class="a ds" style="left:409px;top:511.0px;font-weight:bold">4. ОСВІТНІ КОМПОНЕНТИ</div>
<div class="a ds" style="left:367px;top:526.5px;font-weight:bold">ЗА ВИБОРОМ ЗДОБУВАЧА ОСВІТИ</div>
<div class="a ds" style="left:423px;width:600px;text-align:center;top:518.6px;font-weight:bold">18</div>
<div class="a ds" style="left:-58.5px;width:600px;text-align:center;top:543.3px;">ВК 01</div>
<div class="a ds" style="left:290px;top:543.3px;">Вибіркова компонента</div>
<div class="a ds" style="left:423px;width:600px;text-align:center;top:543.3px;">3</div>
<div class="a ds" style="left:493px;width:600px;text-align:center;top:543.3px;">залік</div>
<div class="a ds" style="left:-58.5px;width:600px;text-align:center;top:559.9px;">ВК 02</div>
<div class="a ds" style="left:290px;top:559.9px;">Вибіркова компонента</div>
<div class="a ds" style="left:423px;width:600px;text-align:center;top:559.9px;">3</div>
<div class="a ds" style="left:493px;width:600px;text-align:center;top:559.9px;">залік</div>
<div class="a ds" style="left:-58.5px;width:600px;text-align:center;top:576.5px;">ВК 03</div>
<div class="a ds" style="left:290px;top:576.5px;">Вибіркова компонента</div>
<div class="a ds" style="left:423px;width:600px;text-align:center;top:576.5px;">3</div>
<div class="a ds" style="left:493px;width:600px;text-align:center;top:576.5px;">залік</div>
<div class="a ds" style="left:-58.5px;width:600px;text-align:center;top:593.1px;">ВК 04</div>
<div class="a ds" style="left:290px;top:593.1px;">Вибіркова компонента</div>
<div class="a ds" style="left:423px;width:600px;text-align:center;top:593.1px;">3</div>
<div class="a ds" style="left:493px;width:600px;text-align:center;top:593.1px;">залік</div>
<div class="a ds" style="left:-58.5px;width:600px;text-align:center;top:609.8px;">ВК 05</div>
<div class="a ds" style="left:290px;top:609.8px;">Вибіркова компонента</div>
<div class="a ds" style="left:423px;width:600px;text-align:center;top:609.8px;">3</div>
<div class="a ds" style="left:493px;width:600px;text-align:center;top:609.8px;">залік</div>
<div class="a ds" style="left:-58.5px;width:600px;text-align:center;top:626.4px;">ВК 06</div>
<div class="a ds" style="left:290px;top:626.4px;">Вибіркова компонента</div>
<div class="a ds" style="left:423px;width:600px;text-align:center;top:626.4px;">3</div>
<div class="a ds" style="left:493px;width:600px;text-align:center;top:626.4px;">залік</div>
<div class="a ds" style="left:214px;top:645.6px;font-weight:bold">Загальний обсяг освітньої програми</div>
<div class="a ds" style="left:423px;width:600px;text-align:center;top:645.6px;font-weight:bold">180</div>
<svg class="a" style="left:723px;top:450px" width="6" height="10" viewBox="0 0 6 10"><path d="M1 0.5h4 M3 0.5v9 M1 9.5h4" stroke="#333" stroke-width="0.7" fill="none"/></svg>
<!-- status bar -->
<div class="a" style="left:16px;top:649px;width:973px;height:13px;background:#f1f1f1;border-top:1px solid #d8d8d8"></div>
<div class="a wt" style="left:19.5px;top:651.5px;color:#666">Oldal: <span style="color:#444">14</span> / 27</div>
<div class="a wt" style="left:70px;top:651.5px;color:#666">8832 szó</div>
<svg class="a" style="left:107px;top:651px" width="9" height="9" viewBox="0 0 9 9"><path d="M0.5 0.5h3.5v8h-3.5z M4 0.5h4.5v8H4" fill="none" stroke="#666" stroke-width="0.7"/><path d="M5.5 3a1 1 0 1 1 2 0a1 1 0 1 1-2 0 M5.5 6a1 1 0 1 1 2 0a1 1 0 1 1-2 0" fill="none" stroke="#666" stroke-width="0.5"/></svg>
<div class="a wt" style="left:125px;top:651.5px;color:#666">ukrán</div>
<svg class="a" style="left:828px;top:651px" width="8" height="9" viewBox="0 0 8 9"><path d="M0.5 0.5h3v8h-3z M4.5 0.5h3v8h-3z" fill="none" stroke="#777" stroke-width="0.8"/></svg>
<div class="a" style="left:843.5px;top:650px;width:21px;height:12px;background:#cfcfcf"></div>
<div class="a" style="left:850px;top:652px;width:8px;height:7px;background:#8a8a8a;border:1px solid #777"></div>
<svg class="a" style="left:872px;top:651px" width="10" height="9" viewBox="0 0 10 9"><path d="M0.5 0.5h6v8h-6z" fill="none" stroke="#777" stroke-width="0.8"/><circle cx="7" cy="6" r="2.3" fill="#f1f1f1" stroke="#777" stroke-width="0.7"/></svg>
<div class="a" style="left:890px;top:655px;width:4px;height:1px;background:#555"></div>
<div class="a" style="left:896px;top:655.5px;width:58px;height:1px;background:#c8c8c8"></div>
<div class="a" style="left:928px;top:652px;width:2px;height:7px;background:#555"></div>
<div class="a" style="left:924.5px;top:653.5px;width:1px;height:4px;background:#999"></div>
<svg class="a" style="left:957px;top:652px" width="6" height="6" viewBox="0 0 6 6"><path d="M0 3h6 M3 0v6" stroke="#555" stroke-width="1"/></svg>
<div class="a wt" style="left:970.5px;top:651.5px;color:#666">150%</div>

<!-- taskbar -->
<div class="a" style="left:16px;top:662px;width:973px;height:22px;background:#1a1a1a"></div>
<svg class="a" style="left:23.5px;top:668.5px" width="11" height="10" viewBox="0 0 11 10"><path d="M0 1.4l4.6-0.7v4H0z M5.3 0.6L11 0v4.7H5.3z M0 5.3h4.6v4L0 8.6z M5.3 5.3H11V10l-5.7-0.7z" fill="#fff"/></svg>
<div class="a" style="left:43px;top:662px;width:167px;height:22px;background:#f2f2f2"></div>
<svg class="a" style="left:50px;top:667px" width="10" height="11" viewBox="0 0 10 11"><circle cx="6" cy="4" r="3.2" fill="none" stroke="#222" stroke-width="0.9"/><path d="M3.8 6.3L0.6 10" stroke="#222" stroke-width="1"/></svg>
<div class="a wt" style="left:66.5px;top:668.5px;font-size:8.4px;line-height:10px;color:#333">Írjon ide a kereséshez</div>
<svg class="a" style="left:219px;top:667px" width="11" height="11" viewBox="0 0 11 11"><path d="M1 2.5h7v6H1z" fill="none" stroke="#fff" stroke-width="1"/><path d="M1 1h7 M1 10h7" stroke="#fff" stroke-width="0.8"/><rect x="9" y="4.5" width="1.6" height="2" fill="#fff"/></svg>
<svg class="a" style="left:246px;top:665px" width="15" height="16" viewBox="0 0 15 16"><path d="M14 0.5C8 2 3 7 1 15c3-3 9-6 13-14.5z" fill="#a36bd8"/><path d="M1.5 14.5C5 9 9 5 13 1.5" stroke="#7b45b8" stroke-width="0.8"/></svg>
<div class="a" style="left:275px;top:665px;width:15px;height:15px;border-radius:50%;background:#e6dcf5;border:2px solid #7d55c7"></div>
<div class="a" style="left:283px;top:673px;width:9px;height:9px;border-radius:50%;background:#e81c2c;color:#fff;font-size:6px;line-height:9px;text-align:center;font-weight:bold">20</div>
<div class="a" style="left:304px;top:665.5px;width:14px;height:14px;border-radius:50%;background:#0b5cff;color:#fff;font-size:6.5px;line-height:14px;text-align:center;font-weight:bold">zm</div>
<svg class="a" style="left:334px;top:665px" width="10" height="15" viewBox="0 0 10 15"><rect x="0" y="0" width="10" height="15" rx="1" fill="#607d8b"/><rect x="1.5" y="1.5" width="7" height="3" fill="#d7e7f2"/><g fill="#cfe0ea"><rect x="1.5" y="6" width="1.8" height="1.8"/><rect x="4.1" y="6" width="1.8" height="1.8"/><rect x="6.7" y="6" width="1.8" height="1.8"/><rect x="1.5" y="9" width="1.8" height="1.8"/><rect x="4.1" y="9" width="1.8" height="1.8"/><rect x="6.7" y="9" width="1.8" height="1.8"/><rect x="1.5" y="12" width="1.8" height="1.8"/><rect x="4.1" y="12" width="1.8" height="1.8"/><rect x="6.7" y="12" width="1.8" height="1.8"/></g></svg>
<svg class="a" style="left:361px;top:666px" width="14" height="13" viewBox="0 0 14 13"><path d="M0 1h5l1.5 1.5H14V13H0z" fill="#e8b84a"/><path d="M0 4h14v9H0z" fill="#f7d26a"/><rect x="4" y="8" width="6" height="2" fill="#2f7ad0"/></svg>
<div class="a" style="left:382px;top:662px;width:27.5px;height:22px;background:#434343"></div>
<svg class="a" style="left:389px;top:666px" width="14" height="13" viewBox="0 0 14 13"><rect x="5" y="0.5" width="8.5" height="12" fill="#fff" stroke="#2b579a" stroke-width="0.6"/><g fill="#2b579a"><rect x="8" y="3" width="4" height="1"/><rect x="8" y="6" width="4" height="1"/><rect x="8" y="9" width="4" height="1"/></g><rect x="0" y="2" width="8.5" height="9" fill="#2b579a"/><text x="4.25" y="9.3" font-family="Liberation Sans" font-size="7" font-weight="bold" fill="#fff" text-anchor="middle">W</text></svg>
<div class="a" style="left:417.5px;top:665px;width:15px;height:15px;border-radius:50%;background:conic-gradient(#db4437 0 120deg,#0f9d58 120deg 240deg,#f4b400 240deg 360deg)"></div>
<div class="a" style="left:422.5px;top:670px;width:5px;height:5px;border-radius:50%;background:#4285f4;border:1px solid #fff"></div>
<div class="a" style="left:425px;top:672px;width:9px;height:9px;border-radius:50%;background:#b7a89a"></div>
<svg class="a" style="left:446px;top:666px" width="14" height="13" viewBox="0 0 14 13"><rect x="5" y="0.5" width="8.5" height="12" fill="#fff" stroke="#1d6f42" stroke-width="0.6"/><g fill="#1d6f42"><rect x="8" y="3" width="4" height="1"/><rect x="8" y="6" width="4" height="1"/><rect x="8" y="9" width="4" height="1"/></g><rect x="0" y="2" width="8.5" height="9" fill="#1d6f42"/><text x="4.25" y="9.3" font-family="Liberation Sans" font-size="7" font-weight="bold" fill="#fff" text-anchor="middle">X</text></svg>
<svg class="a" style="left:815px;top:670px" width="8" height="5" viewBox="0 0 8 5"><path d="M0.5 4.5L4 1l3.5 3.5" fill="none" stroke="#fff" stroke-width="0.9"/></svg>
<svg class="a" style="left:829px;top:666px" width="7" height="12" viewBox="0 0 7 12"><rect x="1.5" y="0" width="4" height="8" rx="2" fill="#fff"/><path d="M0.5 6a3 3 0 0 0 6 0 M3.5 9v2.5" fill="none" stroke="#fff" stroke-width="0.8"/></svg>
<svg class="a" style="left:842px;top:667px" width="11" height="11" viewBox="0 0 11 11"><path d="M2.5 2.5h8v6h-8z M6.5 8.5v2 M4.5 10.5h4 M0.5 1l2 1.5" fill="none" stroke="#fff" stroke-width="0.8"/></svg>
<div class="a" style="left:856px;top:667px;width:10px;height:10px;border-radius:50%;background:#8e6ad8;border:1px solid #fff"></div>
<div class="a" style="left:863px;top:666px;width:3.5px;height:3.5px;border-radius:50%;background:#e81c2c"></div>
<div class="a" style="left:870px;top:667px;width:10px;height:10px;border-radius:50%;background:#1a6ae8"></div>
<svg class="a" style="left:884px;top:667px" width="10" height="10" viewBox="0 0 10 10"><path d="M0.5 3.5h2l2.5-2.5v8L2.5 6.5h-2z M6.5 3a3 3 0 0 1 0 4 M8 1.8a5 5 0 0 1 0 6.4" fill="none" stroke="#fff" stroke-width="0.8"/></svg>
<div class="a wt" style="left:898px;top:668.5px;font-size:7.3px;line-height:9px;color:#fff">HUN</div>
<div class="a wt" style="left:930px;top:663px;font-size:6.6px;line-height:8px;color:#fff">20:29</div>
<div class="a wt" style="left:919.5px;top:674px;font-size:6.6px;line-height:8px;color:#fff">2024. 03. 21.</div>
<svg class="a" style="left:966px;top:668px" width="11" height="10" viewBox="0 0 11 10"><path d="M0 0h11v8H6.5l-1 1.5-1-1.5H0z" fill="#fff"/><path d="M2 2h7 M2 4h7 M2 6h5" stroke="#1a1a1a" stroke-width="0.8"/></svg>
<!-- toast -->
<div class="a" style="left:351px;top:628.5px;width:303px;height:28px;background:rgba(255,255,255,.95);box-shadow:0 1px 3px rgba(0,0,0,.25);border:1px solid rgba(235,200,200,.6)"></div>
<div class="a" style="left:358px;top:638.5px;width:0.8px;height:7px;background:#aaa"></div>
<div class="a" style="left:360px;top:638.5px;width:0.8px;height:7px;background:#aaa"></div>
<div class="a wt" style="left:367px;top:638.5px;font-size:6.9px;color:#333">A(z) meet.google.com megosztja az Ön képernyőjét.</div>
<div class="a" style="left:534px;top:632px;width:87px;height:21px;border-radius:11px;background:#0b57d0"></div>
<div class="a wt" style="left:534px;width:87px;text-align:center;top:638.5px;font-size:7.1px;font-weight:bold;color:#fff">Megosztás leállítása</div>
<div class="a wt" style="left:626.5px;top:638.5px;font-size:6.6px;color:#3b6fd8;text-decoration:underline">Elrejtés</div>

</div></div>

<!-- tiles -->
<div class="a tile" style="left:1006px;top:86px;height:139px;background:#dcd9d3">
 <div class="a" style="left:-4px;top:-4px;width:174px;height:147px;filter:blur(1.2px)">
 <div class="a" style="left:26px;top:4px;width:130px;height:147px;background:repeating-linear-gradient(90deg,#cfcecb 0,#bdbcb8 5px,#8f908c 9px,#a9aaa6 12px,#cfcecb 15px)"></div>
 <div class="a" style="left:95px;top:4px;width:30px;height:70px;background:linear-gradient(90deg,#6d6e6a,#8a8b87 40%,#5f625c)"></div>
 <div class="a" style="left:106px;top:60px;width:20px;height:30px;border-radius:40%;background:#5b6a48"></div>
 <div class="a" style="left:21px;top:73px;width:124px;height:80px;border-radius:55px 60px 0 0;background:#6f6450"></div>
 <div class="a" style="left:61px;top:83px;width:7px;height:3px;border-radius:50%;background:#6a7a7c"></div>
 <div class="a" style="left:35px;top:115px;width:9px;height:4px;border-radius:50%;background:#a08468"></div>
 <div class="a" style="left:73px;top:77px;width:4px;height:5px;border-radius:50%;background:#a08468"></div>
 <div class="a" style="left:132px;top:118px;width:7px;height:3px;border-radius:50%;background:#9a8a62"></div>
 <div class="a" style="left:87px;top:82px;width:6px;height:5px;border-radius:50%;background:#7a8a8e"></div>
 <div class="a" style="left:88px;top:122px;width:5px;height:5px;border-radius:50%;background:#b89a80"></div>
 <div class="a" style="left:66px;top:112px;width:4px;height:3px;border-radius:50%;background:#b89a80"></div>
 <div class="a" style="left:81px;top:111px;width:8px;height:5px;border-radius:50%;background:#c4a890"></div>
 <div class="a" style="left:65px;top:90px;width:5px;height:6px;border-radius:50%;background:#a08468"></div>
 <div class="a" style="left:89px;top:110px;width:8px;height:6px;border-radius:50%;background:#7a8a8e"></div>
 <div class="a" style="left:93px;top:77px;width:7px;height:4px;border-radius:50%;background:#4e4a3a"></div>
 <div class="a" style="left:41px;top:108px;width:4px;height:6px;border-radius:50%;background:#6a7a7c"></div>
 <div class="a" style="left:89px;top:136px;width:6px;height:6px;border-radius:50%;background:#c4a890"></div>
 <div class="a" style="left:90px;top:105px;width:8px;height:7px;border-radius:50%;background:#c4a890"></div>
 <div class="a" style="left:103px;top:77px;width:8px;height:4px;border-radius:50%;background:#c4a890"></div>
 <div class="a" style="left:56px;top:100px;width:7px;height:3px;border-radius:50%;background:#c4a890"></div>
 <div class="a" style="left:65px;top:117px;width:6px;height:4px;border-radius:50%;background:#7a8a8e"></div>
 <div class="a" style="left:39px;top:90px;width:6px;height:6px;border-radius:50%;background:#a08468"></div>
 <div class="a" style="left:43px;top:101px;width:5px;height:4px;border-radius:50%;background:#9a8a62"></div>
 <div class="a" style="left:122px;top:92px;width:6px;height:4px;border-radius:50%;background:#9a8a62"></div>
 <div class="a" style="left:44px;top:89px;width:5px;height:5px;border-radius:50%;background:#5d5540"></div>
 <div class="a" style="left:72px;top:99px;width:7px;height:7px;border-radius:50%;background:#6a7a7c"></div>
 <div class="a" style="left:132px;top:120px;width:8px;height:5px;border-radius:50%;background:#6a7a7c"></div>
 <div class="a" style="left:69px;top:101px;width:5px;height:6px;border-radius:50%;background:#8d9ea6"></div>
 <div class="a" style="left:46px;top:144px;width:6px;height:3px;border-radius:50%;background:#8d9ea6"></div>
 <div class="a" style="left:36px;top:113px;width:7px;height:7px;border-radius:50%;background:#8d9ea6"></div>
 <div class="a" style="left:67px;top:118px;width:9px;height:5px;border-radius:50%;background:#c4a890"></div>
 <div class="a" style="left:38px;top:134px;width:9px;height:5px;border-radius:50%;background:#c4a890"></div>
 <div class="a" style="left:60px;top:83px;width:8px;height:6px;border-radius:50%;background:#c4a890"></div>
 <div class="a" style="left:118px;top:84px;width:4px;height:7px;border-radius:50%;background:#6a7a7c"></div>
 <div class="a" style="left:65px;top:122px;width:9px;height:6px;border-radius:50%;background:#7a8a8e"></div>
 <div class="a" style="left:136px;top:135px;width:7px;height:4px;border-radius:50%;background:#4e4a3a"></div>
 <div class="a" style="left:128px;top:98px;width:5px;height:5px;border-radius:50%;background:#6a7a7c"></div>
 <div class="a" style="left:62px;top:88px;width:8px;height:7px;border-radius:50%;background:#b89a80"></div>
 <div class="a" style="left:116px;top:132px;width:8px;height:4px;border-radius:50%;background:#6a7a7c"></div>
 <div class="a" style="left:80px;top:125px;width:9px;height:6px;border-radius:50%;background:#c4a890"></div>
 <div class="a" style="left:54px;top:123px;width:9px;height:5px;border-radius:50%;background:#4e4a3a"></div>
 <div class="a" style="left:133px;top:99px;width:5px;height:4px;border-radius:50%;background:#b89a80"></div>
 <div class="a" style="left:63px;top:107px;width:9px;height:5px;border-radius:50%;background:#8d9ea6"></div>
 <div class="a" style="left:79px;top:120px;width:8px;height:3px;border-radius:50%;background:#a08468"></div>
 <div class="a" style="left:128px;top:129px;width:8px;height:5px;border-radius:50%;background:#5d5540"></div>
 <div class="a" style="left:73px;top:118px;width:4px;height:7px;border-radius:50%;background:#9a8a62"></div>
 <div class="a" style="left:77px;top:126px;width:4px;height:4px;border-radius:50%;background:#5d5540"></div>
 <div class="a" style="left:27px;top:115px;width:6px;height:6px;border-radius:50%;background:#c4a890"></div>
 <div class="a" style="left:99px;top:98px;width:7px;height:4px;border-radius:50%;background:#8d9ea6"></div>
 <div class="a" style="left:115px;top:125px;width:5px;height:6px;border-radius:50%;background:#5d5540"></div>
 <div class="a" style="left:73px;top:136px;width:8px;height:4px;border-radius:50%;background:#7a8a8e"></div>
 <div class="a" style="left:48px;top:109px;width:8px;height:4px;border-radius:50%;background:#6a7a7c"></div>
 <div class="a" style="left:72px;top:82px;width:9px;height:4px;border-radius:50%;background:#c4a890"></div>
 <div class="a" style="left:100px;top:131px;width:7px;height:6px;border-radius:50%;background:#6a7a7c"></div>
 <div class="a" style="left:39px;top:83px;width:7px;height:6px;border-radius:50%;background:#5d5540"></div>
 <div class="a" style="left:93px;top:129px;width:5px;height:4px;border-radius:50%;background:#a08468"></div>
 <div class="a" style="left:87px;top:96px;width:7px;height:5px;border-radius:50%;background:#a08468"></div>
 <div class="a" style="left:35px;top:105px;width:4px;height:7px;border-radius:50%;background:#a08468"></div>
 <div class="a" style="left:75px;top:117px;width:7px;height:5px;border-radius:50%;background:#7a8a8e"></div>
 <div class="a" style="left:76px;top:111px;width:6px;height:7px;border-radius:50%;background:#6a7a7c"></div>
 <div class="a" style="left:124px;top:141px;width:5px;height:5px;border-radius:50%;background:#b89a80"></div>
 <div class="a" style="left:120px;top:82px;width:5px;height:5px;border-radius:50%;background:#a08468"></div>
 <div class="a" style="left:101px;top:103px;width:5px;height:4px;border-radius:50%;background:#a08468"></div>
 <div class="a" style="left:126px;top:83px;width:8px;height:6px;border-radius:50%;background:#5d5540"></div>
 <div class="a" style="left:136px;top:106px;width:40px;height:40px;border-radius:10px 0 0 0;background:#1f1f1f"></div>
 <div class="a" style="left:50px;top:86px;width:35px;height:20px;background:#c98e78"></div>
 <div class="a" style="left:40px;top:20px;width:53px;height:80px;border-radius:48%;background:radial-gradient(ellipse at 50% 55%,#dca592 0,#cf9a86 50%,#b98570 100%)"></div>
 <div class="a" style="left:36px;top:7px;width:60px;height:24px;border-radius:30px 30px 12px 12px;background:#8f7d66"></div>
 <div class="a" style="left:35px;top:18px;width:9px;height:34px;border-radius:5px;background:#8f7d66"></div>
 <div class="a" style="left:88px;top:18px;width:9px;height:32px;border-radius:5px;background:#8f7d66"></div>
 </div>
 <div class="a" style="left:33px;top:41px;width:21px;height:17px;border-radius:50%;border:2px solid #5a3328"></div>
 <div class="a" style="left:58px;top:41px;width:21px;height:17px;border-radius:50%;border:2px solid #5a3328"></div>
 <div class="mute"><svg viewBox="0 0 24 24"><path fill="#fff" d="M19 11h-1.7c0 .74-.16 1.43-.43 2.05l1.23 1.23c.56-.98.9-2.09.9-3.28zm-4.02.17c0-.06.02-.11.02-.17V5c0-1.66-1.34-3-3-3S9 3.34 9 5v.18l5.98 5.99zM4.27 3L3 4.27l6.01 6.01V11c0 1.66 1.33 3 2.99 3 .22 0 .44-.03.65-.08l1.66 1.66c-.71.33-1.5.52-2.31.52-2.76 0-5.3-2.1-5.3-5.1H5c0 3.41 2.72 6.23 6 6.72V21h2v-3.28c.91-.13 1.77-.45 2.54-.9L19.73 21 21 19.73 4.27 3z"/></svg></div>
 <div class="tname">Едіта Бабяк</div>
</div>

<div class="a tile" style="left:1184px;top:86px;height:139px;background:#8ab4f8">
 <div class="a" style="left:3px;top:3px;width:160px;height:133px;border-radius:6px;overflow:hidden;background:#c9c6bf">
  <div class="a" style="left:-3px;top:-3px;width:166px;height:139px;filter:blur(0.8px)">
  <svg class="a" style="left:0;top:0" width="166" height="139" viewBox="0 0 166 139"><rect x="0" y="0" width="166" height="139" fill="#cfcdc6"/><rect x="0.0" y="5.5" width="2.5" height="9.5" fill="#5e6a70"/><rect x="2.5" y="7.2" width="2.5" height="7.8" fill="#5e6a70"/><rect x="5.0" y="5.8" width="2" height="9.2" fill="#6e6a62"/><rect x="7.0" y="8.6" width="2" height="6.4" fill="#5a5248"/><rect x="9.0" y="5.8" width="3" height="9.2" fill="#7a6e60"/><rect x="12.0" y="5.1" width="3" height="9.9" fill="#6e6a62"/><rect x="15.0" y="6.4" width="6.113525064681915" height="8.6" fill="#a8a49c"/><rect x="21.1" y="8.9" width="1.5" height="6.1" fill="#8a8070"/><rect x="22.6" y="7.7" width="2.5" height="7.3" fill="#3c3834"/><rect x="25.1" y="8.1" width="3" height="6.9" fill="#5a5248"/><rect x="28.1" y="8.7" width="3.5" height="6.3" fill="#4a4038"/><rect x="31.6" y="5.0" width="3" height="10.0" fill="#5e6a70"/><rect x="34.6" y="7.7" width="2" height="7.3" fill="#8a8070"/><rect x="36.6" y="8.7" width="1.5" height="6.3" fill="#e8e4dc"/><rect x="38.1" y="5.6" width="4.067561890104704" height="9.4" fill="#a8a49c"/><rect x="42.2" y="9.0" width="3.5" height="6.0" fill="#8a8070"/><rect x="45.7" y="7.1" width="1.5" height="7.9" fill="#7a6e60"/><rect x="47.2" y="6.7" width="1.5" height="8.3" fill="#8a8070"/><rect x="48.7" y="7.7" width="2" height="7.3" fill="#5a5248"/><rect x="50.7" y="6.0" width="2.5" height="9.0" fill="#e6e2d6"/><rect x="53.2" y="8.6" width="3.5" height="6.4" fill="#f0efe9"/><rect x="56.7" y="8.3" width="2.5" height="6.7" fill="#9c9488"/><rect x="59.2" y="8.2" width="3" height="6.8" fill="#7a6e60"/><rect x="62.2" y="6.4" width="2.5" height="8.6" fill="#e6e2d6"/><rect x="64.7" y="9.0" width="2" height="6.0" fill="#5e6a70"/><rect x="66.7" y="7.8" width="3" height="7.2" fill="#f0efe9"/><rect x="69.7" y="5.0" width="2.5" height="10.0" fill="#3c3834"/><rect x="72.2" y="8.8" width="1.5" height="6.2" fill="#cfc8b8"/><rect x="73.7" y="9.0" width="2" height="6.0" fill="#3c3834"/><rect x="75.7" y="7.5" width="2" height="7.5" fill="#e6e2d6"/><rect x="77.7" y="6.5" width="3" height="8.5" fill="#f0efe9"/><rect x="80.7" y="6.5" width="2" height="8.5" fill="#cfc8b8"/><rect x="82.7" y="5.7" width="2.5" height="9.3" fill="#cfc8b8"/><rect x="85.2" y="6.5" width="2" height="8.5" fill="#5a5248"/><rect x="87.2" y="8.0" width="3" height="7.0" fill="#8a8070"/><rect x="90.2" y="5.2" width="3.5" height="9.8" fill="#8a8070"/><rect x="93.7" y="5.5" width="4.1896062822294144" height="9.5" fill="#a8a49c"/><rect x="97.9" y="8.8" width="1.5" height="6.2" fill="#5a5248"/><rect x="99.4" y="7.4" width="3.5" height="7.6" fill="#b8b0a0"/><rect x="102.9" y="7.0" width="3" height="8.0" fill="#9c9488"/><rect x="105.9" y="5.1" width="3.5" height="9.9" fill="#cfc8b8"/><rect x="109.4" y="6.4" width="3" height="8.6" fill="#3c3834"/><rect x="112.4" y="8.2" width="2" height="6.8" fill="#8a8070"/><rect x="114.4" y="7.9" width="1.5" height="7.1" fill="#6e6a62"/><rect x="115.9" y="8.3" width="1.5" height="6.7" fill="#2e2a26"/><rect x="117.4" y="8.6" width="2" height="6.4" fill="#cfc8b8"/><rect x="119.4" y="6.4" width="2" height="8.6" fill="#7a6e60"/><rect x="121.4" y="6.6" width="2" height="8.4" fill="#f0efe9"/><rect x="123.4" y="6.2" width="6.544738086308051" height="8.8" fill="#a8a49c"/><rect x="129.9" y="8.7" width="2.5" height="6.3" fill="#5a5248"/><rect x="132.4" y="8.7" width="1.5" height="6.3" fill="#9c9488"/><rect x="133.9" y="5.4" width="1.5" height="9.6" fill="#7a6e60"/><rect x="135.4" y="5.8" width="2" height="9.2" fill="#2e2a26"/><rect x="137.4" y="7.1" width="3.5" height="7.9" fill="#e6e2d6"/><rect x="140.9" y="5.2" width="2.5" height="9.8" fill="#f0efe9"/><rect x="143.4" y="8.9" width="3" height="6.1" fill="#4a4038"/><rect x="146.4" y="9.0" width="3" height="6.0" fill="#e6e2d6"/><rect x="149.4" y="8.5" width="3.5" height="6.5" fill="#5a5248"/><rect x="152.9" y="7.7" width="3.5" height="7.3" fill="#7a6e60"/><rect x="156.4" y="7.2" width="2.5" height="7.8" fill="#5e6a70"/><rect x="158.9" y="6.0" width="3" height="9.0" fill="#f0efe9"/><rect x="161.9" y="7.1" width="1.5" height="7.9" fill="#8a8070"/><rect x="163.4" y="7.0" width="1.5" height="8.0" fill="#3c3834"/><rect x="164.9" y="8.0" width="2.5" height="7.0" fill="#f0efe9"/><rect x="0" y="3" width="166" height="2" fill="#e9e8e2"/><rect x="0.0" y="18.7" width="2" height="11.3" fill="#8a8070"/><rect x="2.0" y="18.8" width="2" height="11.2" fill="#6e6a62"/><rect x="4.0" y="20.5" width="2" height="9.5" fill="#4a4038"/><rect x="6.0" y="20.0" width="3.5" height="10.0" fill="#e8e4dc"/><rect x="9.5" y="17.6" width="2" height="12.4" fill="#b8b0a0"/><rect x="11.5" y="21.1" width="2" height="8.9" fill="#cfc8b8"/><rect x="13.5" y="18.5" width="1.5" height="11.5" fill="#5a5248"/><rect x="15.0" y="19.9" width="1.5" height="10.1" fill="#5a5248"/><rect x="16.5" y="20.2" width="2.5" height="9.8" fill="#9c9488"/><rect x="19.0" y="18.5" width="2" height="11.5" fill="#5e6a70"/><rect x="21.0" y="20.5" width="7.49131621740921" height="9.5" fill="#a8a49c"/><rect x="28.5" y="18.7" width="1.5" height="11.3" fill="#5a5248"/><rect x="30.0" y="18.8" width="4.54352463499275" height="11.2" fill="#a8a49c"/><rect x="34.5" y="21.2" width="2.5" height="8.8" fill="#e8e4dc"/><rect x="37.0" y="18.1" width="6.516721222260738" height="11.9" fill="#a8a49c"/><rect x="43.6" y="21.6" width="2.5" height="8.4" fill="#9c9488"/><rect x="46.1" y="17.2" width="2" height="12.8" fill="#4a4038"/><rect x="48.1" y="20.9" width="5.8887980143680725" height="9.1" fill="#a8a49c"/><rect x="53.9" y="22.0" width="3.5" height="8.0" fill="#8a8070"/><rect x="57.4" y="19.4" width="2" height="10.6" fill="#9c9488"/><rect x="59.4" y="20.2" width="2" height="9.8" fill="#e8e4dc"/><rect x="61.4" y="21.7" width="2" height="8.3" fill="#7a6e60"/><rect x="63.4" y="19.8" width="2.5" height="10.2" fill="#4a4038"/><rect x="65.9" y="20.2" width="1.5" height="9.8" fill="#3c3834"/><rect x="67.4" y="18.1" width="3" height="11.9" fill="#2e2a26"/><rect x="70.4" y="17.1" width="3.5" height="12.9" fill="#e6e2d6"/><rect x="73.9" y="17.4" width="3.5" height="12.6" fill="#e6e2d6"/><rect x="77.4" y="17.1" width="2.5" height="12.9" fill="#5a5248"/><rect x="79.9" y="20.8" width="2" height="9.2" fill="#7a6e60"/><rect x="81.9" y="19.6" width="2" height="10.4" fill="#f0efe9"/><rect x="83.9" y="20.0" width="3" height="10.0" fill="#5a5248"/><rect x="86.9" y="21.1" width="7.199439467045792" height="8.9" fill="#a8a49c"/><rect x="94.1" y="19.4" width="2" height="10.6" fill="#4a4038"/><rect x="96.1" y="19.8" width="2" height="10.2" fill="#9c9488"/><rect x="98.1" y="17.8" width="3" height="12.2" fill="#7a6e60"/><rect x="101.1" y="19.2" width="2.5" height="10.8" fill="#7a6e60"/><rect x="103.6" y="19.9" width="2" height="10.1" fill="#9c9488"/><rect x="105.6" y="19.3" width="3.5" height="10.7" fill="#cfc8b8"/><rect x="109.1" y="20.9" width="3" height="9.1" fill="#4a4038"/><rect x="112.1" y="21.1" width="3" height="8.9" fill="#5e6a70"/><rect x="115.1" y="19.5" width="3" height="10.5" fill="#3c3834"/><rect x="118.1" y="19.4" width="5.508120865456924" height="10.6" fill="#a8a49c"/><rect x="123.6" y="17.2" width="3" height="12.8" fill="#9c9488"/><rect x="126.6" y="18.0" width="3" height="12.0" fill="#3c3834"/><rect x="129.6" y="18.6" width="1.5" height="11.4" fill="#e6e2d6"/><rect x="131.1" y="20.0" width="2.5" height="10.0" fill="#e8e4dc"/><rect x="133.6" y="20.9" width="2" height="9.1" fill="#6e6a62"/><rect x="135.6" y="17.5" width="2.5" height="12.5" fill="#6e6a62"/><rect x="138.1" y="21.2" width="5.040890995546026" height="8.8" fill="#a8a49c"/><rect x="143.2" y="18.1" width="4.6221162446516555" height="11.9" fill="#a8a49c"/><rect x="147.8" y="18.6" width="1.5" height="11.4" fill="#2e2a26"/><rect x="149.3" y="19.0" width="2" height="11.0" fill="#e6e2d6"/><rect x="151.3" y="21.6" width="3" height="8.4" fill="#9c9488"/><rect x="154.3" y="21.2" width="3.5" height="8.8" fill="#9c9488"/><rect x="157.8" y="20.2" width="1.5" height="9.8" fill="#b8b0a0"/><rect x="159.3" y="21.4" width="3" height="8.6" fill="#8a8070"/><rect x="162.3" y="18.9" width="3" height="11.1" fill="#9c9488"/><rect x="165.3" y="19.0" width="3" height="11.0" fill="#5e6a70"/><rect x="0" y="15" width="166" height="2" fill="#e9e8e2"/><rect x="0.0" y="33.9" width="3.5" height="11.1" fill="#2e2a26"/><rect x="3.5" y="34.1" width="2" height="10.9" fill="#8a8070"/><rect x="5.5" y="32.6" width="2" height="12.4" fill="#cfc8b8"/><rect x="7.5" y="33.4" width="2" height="11.6" fill="#5a5248"/><rect x="9.5" y="32.9" width="2.5" height="12.1" fill="#b8b0a0"/><rect x="12.0" y="36.5" width="3.5" height="8.5" fill="#b8b0a0"/><rect x="15.5" y="36.7" width="1.5" height="8.3" fill="#3c3834"/><rect x="17.0" y="36.6" width="2" height="8.4" fill="#9c9488"/><rect x="19.0" y="34.6" width="2" height="10.4" fill="#4a4038"/><rect x="21.0" y="34.7" width="6.206686008374794" height="10.3" fill="#a8a49c"/><rect x="27.2" y="32.5" width="3" height="12.5" fill="#6e6a62"/><rect x="30.2" y="36.6" width="2" height="8.4" fill="#cfc8b8"/><rect x="32.2" y="32.4" width="2" height="12.6" fill="#e6e2d6"/><rect x="34.2" y="32.3" width="4.386855820620872" height="12.7" fill="#a8a49c"/><rect x="38.6" y="34.8" width="2.5" height="10.2" fill="#9c9488"/><rect x="41.1" y="34.1" width="2" height="10.9" fill="#f0efe9"/><rect x="43.1" y="32.8" width="1.5" height="12.2" fill="#cfc8b8"/><rect x="44.6" y="33.4" width="2" height="11.6" fill="#b8b0a0"/><rect x="46.6" y="36.3" width="3" height="8.7" fill="#9c9488"/><rect x="49.6" y="32.6" width="2" height="12.4" fill="#e8e4dc"/><rect x="51.6" y="32.3" width="3.5" height="12.7" fill="#3c3834"/><rect x="55.1" y="34.2" width="3" height="10.8" fill="#2e2a26"/><rect x="58.1" y="35.7" width="2" height="9.3" fill="#e6e2d6"/><rect x="60.1" y="33.0" width="2" height="12.0" fill="#b8b0a0"/><rect x="62.1" y="32.6" width="2" height="12.4" fill="#7a6e60"/><rect x="64.1" y="33.2" width="2.5" height="11.8" fill="#b8b0a0"/><rect x="66.6" y="36.8" width="2" height="8.2" fill="#2e2a26"/><rect x="68.6" y="37.1" width="1.5" height="7.9" fill="#2e2a26"/><rect x="70.1" y="36.9" width="3" height="8.1" fill="#5a5248"/><rect x="73.1" y="35.6" width="3.5" height="9.4" fill="#8a8070"/><rect x="76.6" y="36.3" width="3" height="8.7" fill="#e6e2d6"/><rect x="79.6" y="33.9" width="2.5" height="11.1" fill="#7a6e60"/><rect x="82.1" y="32.1" width="2.5" height="12.9" fill="#f0efe9"/><rect x="84.6" y="33.4" width="1.5" height="11.6" fill="#5a5248"/><rect x="86.1" y="36.9" width="3" height="8.1" fill="#8a8070"/><rect x="89.1" y="36.7" width="1.5" height="8.3" fill="#5a5248"/><rect x="90.6" y="34.3" width="2" height="10.7" fill="#9c9488"/><rect x="92.6" y="34.2" width="3" height="10.8" fill="#e6e2d6"/><rect x="95.6" y="36.8" width="3.5" height="8.2" fill="#3c3834"/><rect x="99.1" y="35.2" width="1.5" height="9.8" fill="#cfc8b8"/><rect x="100.6" y="32.8" width="2" height="12.2" fill="#9c9488"/><rect x="102.6" y="35.0" width="1.5" height="10.0" fill="#6e6a62"/><rect x="104.1" y="35.1" width="3" height="9.9" fill="#5a5248"/><rect x="107.1" y="34.7" width="2" height="10.3" fill="#5a5248"/><rect x="109.1" y="33.7" width="2" height="11.3" fill="#7a6e60"/><rect x="111.1" y="33.2" width="4.626349699759656" height="11.8" fill="#a8a49c"/><rect x="115.7" y="35.2" width="3.5" height="9.8" fill="#2e2a26"/><rect x="119.2" y="34.2" width="1.5" height="10.8" fill="#7a6e60"/><rect x="120.7" y="33.1" width="1.5" height="11.9" fill="#8a8070"/><rect x="122.2" y="35.9" width="2.5" height="9.1" fill="#e8e4dc"/><rect x="124.7" y="36.7" width="3" height="8.3" fill="#e8e4dc"/><rect x="127.7" y="36.4" width="2.5" height="8.6" fill="#5e6a70"/><rect x="130.2" y="36.6" width="3.5" height="8.4" fill="#3c3834"/><rect x="133.7" y="36.1" width="1.5" height="8.9" fill="#f0efe9"/><rect x="135.2" y="36.6" width="2" height="8.4" fill="#6e6a62"/><rect x="137.2" y="34.8" width="2.5" height="10.2" fill="#5a5248"/><rect x="139.7" y="35.0" width="3.5" height="10.0" fill="#e8e4dc"/><rect x="143.2" y="32.2" width="2" height="12.8" fill="#7a6e60"/><rect x="145.2" y="36.6" width="2.5" height="8.4" fill="#5a5248"/><rect x="147.7" y="32.8" width="3" height="12.2" fill="#5a5248"/><rect x="150.7" y="33.4" width="3.5" height="11.6" fill="#7a6e60"/><rect x="154.2" y="35.8" width="3.5" height="9.2" fill="#8a8070"/><rect x="157.7" y="34.6" width="2" height="10.4" fill="#4a4038"/><rect x="159.7" y="37.0" width="5.0380755789635465" height="8.0" fill="#a8a49c"/><rect x="164.8" y="34.0" width="1.5" height="11.0" fill="#e6e2d6"/><rect x="0" y="30" width="166" height="2" fill="#e9e8e2"/><rect x="0.0" y="51.5" width="2" height="7.5" fill="#e6e2d6"/><rect x="2.0" y="49.2" width="2" height="9.8" fill="#4a4038"/><rect x="4.0" y="49.5" width="2.5" height="9.5" fill="#8a8070"/><rect x="6.5" y="48.2" width="2.5" height="10.8" fill="#5e6a70"/><rect x="9.0" y="49.7" width="1.5" height="9.3" fill="#5e6a70"/><rect x="10.5" y="49.7" width="2" height="9.3" fill="#7a6e60"/><rect x="12.5" y="50.0" width="2" height="9.0" fill="#4a4038"/><rect x="14.5" y="50.2" width="3" height="8.8" fill="#9c9488"/><rect x="17.5" y="49.7" width="2" height="9.3" fill="#2e2a26"/><rect x="19.5" y="47.6" width="2.5" height="11.4" fill="#e6e2d6"/><rect x="22.0" y="49.1" width="2.5" height="9.9" fill="#6e6a62"/><rect x="24.5" y="50.4" width="5.240583187736879" height="8.6" fill="#a8a49c"/><rect x="29.7" y="48.9" width="3.5" height="10.1" fill="#7a6e60"/><rect x="33.2" y="48.1" width="3.5" height="10.9" fill="#2e2a26"/><rect x="36.7" y="50.7" width="2" height="8.3" fill="#4a4038"/><rect x="38.7" y="47.4" width="2" height="11.6" fill="#2e2a26"/><rect x="40.7" y="48.9" width="3" height="10.1" fill="#4a4038"/><rect x="43.7" y="49.3" width="2.5" height="9.7" fill="#5a5248"/><rect x="46.2" y="49.9" width="2" height="9.1" fill="#7a6e60"/><rect x="48.2" y="51.4" width="2" height="7.6" fill="#5e6a70"/><rect x="50.2" y="48.6" width="2" height="10.4" fill="#3c3834"/><rect x="52.2" y="48.3" width="2" height="10.7" fill="#2e2a26"/><rect x="54.2" y="51.1" width="3" height="7.9" fill="#3c3834"/><rect x="57.2" y="51.4" width="2" height="7.6" fill="#6e6a62"/><rect x="59.2" y="47.9" width="2" height="11.1" fill="#8a8070"/><rect x="61.2" y="51.0" width="3" height="8.0" fill="#5a5248"/><rect x="64.2" y="47.8" width="6.187264362140734" height="11.2" fill="#a8a49c"/><rect x="70.4" y="51.4" width="3" height="7.6" fill="#e6e2d6"/><rect x="73.4" y="47.5" width="6.614153687473474" height="11.5" fill="#a8a49c"/><rect x="80.0" y="48.2" width="1.5" height="10.8" fill="#4a4038"/><rect x="81.5" y="50.7" width="3.5" height="8.3" fill="#e8e4dc"/><rect x="85.0" y="48.1" width="2" height="10.9" fill="#b8b0a0"/><rect x="87.0" y="48.6" width="2" height="10.4" fill="#6e6a62"/><rect x="89.0" y="51.5" width="3.5" height="7.5" fill="#3c3834"/><rect x="92.5" y="48.2" width="2.5" height="10.8" fill="#4a4038"/><rect x="95.0" y="47.9" width="1.5" height="11.1" fill="#5e6a70"/><rect x="96.5" y="47.2" width="5.448210797014427" height="11.8" fill="#a8a49c"/><rect x="102.0" y="47.9" width="1.5" height="11.1" fill="#b8b0a0"/><rect x="103.5" y="50.6" width="2" height="8.4" fill="#cfc8b8"/><rect x="105.5" y="48.5" width="2.5" height="10.5" fill="#2e2a26"/><rect x="108.0" y="49.3" width="2.5" height="9.7" fill="#5a5248"/><rect x="110.5" y="49.5" width="1.5" height="9.5" fill="#7a6e60"/><rect x="112.0" y="51.1" width="3.5" height="7.9" fill="#cfc8b8"/><rect x="115.5" y="51.7" width="2.5" height="7.3" fill="#6e6a62"/><rect x="118.0" y="50.3" width="1.5" height="8.7" fill="#8a8070"/><rect x="119.5" y="49.0" width="2" height="10.0" fill="#3c3834"/><rect x="121.5" y="49.4" width="3" height="9.6" fill="#6e6a62"/><rect x="124.5" y="49.9" width="2" height="9.1" fill="#e8e4dc"/><rect x="126.5" y="49.2" width="3.5" height="9.8" fill="#5e6a70"/><rect x="130.0" y="49.5" width="2" height="9.5" fill="#b8b0a0"/><rect x="132.0" y="48.6" width="2" height="10.4" fill="#e8e4dc"/><rect x="134.0" y="47.7" width="7.790080670544274" height="11.3" fill="#a8a49c"/><rect x="141.8" y="47.1" width="2.5" height="11.9" fill="#e8e4dc"/><rect x="144.3" y="48.0" width="2" height="11.0" fill="#f0efe9"/><rect x="146.3" y="47.5" width="2" height="11.5" fill="#5e6a70"/><rect x="148.3" y="49.6" width="2" height="9.4" fill="#8a8070"/><rect x="150.3" y="47.6" width="3" height="11.4" fill="#b8b0a0"/><rect x="153.3" y="51.1" width="2" height="7.9" fill="#5e6a70"/><rect x="155.3" y="48.7" width="2" height="10.3" fill="#3c3834"/><rect x="157.3" y="51.5" width="3" height="7.5" fill="#3c3834"/><rect x="160.3" y="50.8" width="1.5" height="8.2" fill="#5e6a70"/><rect x="161.8" y="51.4" width="2" height="7.6" fill="#5a5248"/><rect x="163.8" y="51.3" width="3" height="7.7" fill="#6e6a62"/><rect x="0" y="45" width="166" height="2" fill="#e9e8e2"/><rect x="0.0" y="61.2" width="1.5" height="12.8" fill="#3c3834"/><rect x="1.5" y="64.6" width="3" height="9.4" fill="#e8e4dc"/><rect x="4.5" y="61.4" width="2" height="12.6" fill="#e6e2d6"/><rect x="6.5" y="65.1" width="2.5" height="8.9" fill="#9c9488"/><rect x="9.0" y="65.4" width="2.5" height="8.6" fill="#5e6a70"/><rect x="11.5" y="64.6" width="2" height="9.4" fill="#e6e2d6"/><rect x="13.5" y="62.7" width="2.5" height="11.3" fill="#e6e2d6"/><rect x="16.0" y="65.5" width="3.5" height="8.5" fill="#4a4038"/><rect x="19.5" y="62.3" width="2.5" height="11.7" fill="#e8e4dc"/><rect x="22.0" y="63.9" width="3.5" height="10.1" fill="#5e6a70"/><rect x="25.5" y="63.7" width="3.5" height="10.3" fill="#5a5248"/><rect x="29.0" y="62.2" width="2.5" height="11.8" fill="#5e6a70"/><rect x="31.5" y="65.1" width="3.5" height="8.9" fill="#3c3834"/><rect x="35.0" y="64.2" width="3.5" height="9.8" fill="#9c9488"/><rect x="38.5" y="62.3" width="2" height="11.7" fill="#9c9488"/><rect x="40.5" y="65.2" width="2" height="8.8" fill="#b8b0a0"/><rect x="42.5" y="64.6" width="2" height="9.4" fill="#5a5248"/><rect x="44.5" y="62.9" width="3.5" height="11.1" fill="#6e6a62"/><rect x="48.0" y="65.7" width="1.5" height="8.3" fill="#3c3834"/><rect x="49.5" y="62.9" width="3.5" height="11.1" fill="#cfc8b8"/><rect x="53.0" y="66.0" width="2.5" height="8.0" fill="#6e6a62"/><rect x="55.5" y="65.7" width="1.5" height="8.3" fill="#f0efe9"/><rect x="57.0" y="63.9" width="7.682462061144628" height="10.1" fill="#a8a49c"/><rect x="64.7" y="61.4" width="2.5" height="12.6" fill="#cfc8b8"/><rect x="67.2" y="61.9" width="2" height="12.1" fill="#b8b0a0"/><rect x="69.2" y="63.0" width="2.5" height="11.0" fill="#7a6e60"/><rect x="71.7" y="64.5" width="3.5" height="9.5" fill="#e8e4dc"/><rect x="75.2" y="61.1" width="5.324061786793468" height="12.9" fill="#a8a49c"/><rect x="80.5" y="64.6" width="2" height="9.4" fill="#6e6a62"/><rect x="82.5" y="65.1" width="2.5" height="8.9" fill="#2e2a26"/><rect x="85.0" y="63.0" width="1.5" height="11.0" fill="#cfc8b8"/><rect x="86.5" y="61.5" width="3" height="12.5" fill="#9c9488"/><rect x="89.5" y="63.6" width="3" height="10.4" fill="#cfc8b8"/><rect x="92.5" y="61.1" width="2" height="12.9" fill="#9c9488"/><rect x="94.5" y="61.9" width="3.5" height="12.1" fill="#8a8070"/><rect x="98.0" y="62.9" width="1.5" height="11.1" fill="#8a8070"/><rect x="99.5" y="64.9" width="2" height="9.1" fill="#3c3834"/><rect x="101.5" y="64.5" width="2" height="9.5" fill="#5e6a70"/><rect x="103.5" y="61.6" width="2.5" height="12.4" fill="#6e6a62"/><rect x="106.0" y="65.0" width="2" height="9.0" fill="#3c3834"/><rect x="108.0" y="65.9" width="3" height="8.1" fill="#5a5248"/><rect x="111.0" y="61.0" width="3.5" height="13.0" fill="#5e6a70"/><rect x="114.5" y="65.6" width="6.740287926703935" height="8.4" fill="#a8a49c"/><rect x="121.2" y="64.9" width="2" height="9.1" fill="#3c3834"/><rect x="123.2" y="65.2" width="2" height="8.8" fill="#9c9488"/><rect x="125.2" y="66.0" width="2.5" height="8.0" fill="#cfc8b8"/><rect x="127.7" y="65.5" width="3.5" height="8.5" fill="#e8e4dc"/><rect x="131.2" y="61.5" width="3.5" height="12.5" fill="#3c3834"/><rect x="134.7" y="65.4" width="1.5" height="8.6" fill="#b8b0a0"/><rect x="136.2" y="63.5" width="2" height="10.5" fill="#e6e2d6"/><rect x="138.2" y="64.5" width="2" height="9.5" fill="#cfc8b8"/><rect x="140.2" y="61.4" width="3" height="12.6" fill="#f0efe9"/><rect x="143.2" y="62.4" width="1.5" height="11.6" fill="#e8e4dc"/><rect x="144.7" y="63.1" width="2.5" height="10.9" fill="#6e6a62"/><rect x="147.2" y="61.5" width="3" height="12.5" fill="#3c3834"/><rect x="150.2" y="63.7" width="2" height="10.3" fill="#6e6a62"/><rect x="152.2" y="64.1" width="3.5" height="9.9" fill="#b8b0a0"/><rect x="155.7" y="61.5" width="1.5" height="12.5" fill="#9c9488"/><rect x="157.2" y="64.0" width="3" height="10.0" fill="#f0efe9"/><rect x="160.2" y="64.7" width="1.5" height="9.3" fill="#3c3834"/><rect x="161.7" y="64.2" width="3.5" height="9.8" fill="#2e2a26"/><rect x="165.2" y="61.6" width="2" height="12.4" fill="#e6e2d6"/><rect x="0" y="59" width="166" height="2" fill="#e9e8e2"/><rect x="0.0" y="79.6" width="2.5" height="8.4" fill="#5e6a70"/><rect x="2.5" y="78.5" width="1.5" height="9.5" fill="#e6e2d6"/><rect x="4.0" y="78.2" width="2" height="9.8" fill="#4a4038"/><rect x="6.0" y="76.6" width="2" height="11.4" fill="#7a6e60"/><rect x="8.0" y="79.0" width="3.5" height="9.0" fill="#9c9488"/><rect x="11.5" y="79.7" width="2" height="8.3" fill="#7a6e60"/><rect x="13.5" y="76.5" width="1.5" height="11.5" fill="#e6e2d6"/><rect x="15.0" y="80.2" width="2" height="7.8" fill="#9c9488"/><rect x="17.0" y="80.8" width="2.5" height="7.2" fill="#8a8070"/><rect x="19.5" y="79.2" width="1.5" height="8.8" fill="#e6e2d6"/><rect x="21.0" y="76.9" width="2.5" height="11.1" fill="#b8b0a0"/><rect x="23.5" y="78.0" width="3.5" height="10.0" fill="#f0efe9"/><rect x="27.0" y="76.5" width="2.5" height="11.5" fill="#5a5248"/><rect x="29.5" y="76.3" width="2" height="11.7" fill="#e8e4dc"/><rect x="31.5" y="79.8" width="2" height="8.2" fill="#5e6a70"/><rect x="33.5" y="79.9" width="1.5" height="8.1" fill="#5e6a70"/><rect x="35.0" y="80.7" width="2.5" height="7.3" fill="#4a4038"/><rect x="37.5" y="79.8" width="3" height="8.2" fill="#4a4038"/><rect x="40.5" y="77.7" width="1.5" height="10.3" fill="#5a5248"/><rect x="42.0" y="76.2" width="2" height="11.8" fill="#5a5248"/><rect x="44.0" y="76.6" width="3.5" height="11.4" fill="#2e2a26"/><rect x="47.5" y="78.8" width="2.5" height="9.2" fill="#cfc8b8"/><rect x="50.0" y="80.2" width="2" height="7.8" fill="#7a6e60"/><rect x="52.0" y="77.3" width="2" height="10.7" fill="#9c9488"/><rect x="54.0" y="79.0" width="2" height="9.0" fill="#4a4038"/><rect x="56.0" y="78.0" width="1.5" height="10.0" fill="#8a8070"/><rect x="57.5" y="77.6" width="2" height="10.4" fill="#5a5248"/><rect x="59.5" y="80.4" width="3.5" height="7.6" fill="#e6e2d6"/><rect x="63.0" y="80.4" width="6.346246727840295" height="7.6" fill="#a8a49c"/><rect x="69.3" y="79.6" width="3" height="8.4" fill="#e8e4dc"/><rect x="72.3" y="79.4" width="2" height="8.6" fill="#e8e4dc"/><rect x="74.3" y="79.5" width="7.161462214500649" height="8.5" fill="#a8a49c"/><rect x="81.5" y="76.1" width="2" height="11.9" fill="#f0efe9"/><rect x="83.5" y="79.0" width="4.256107823729673" height="9.0" fill="#a8a49c"/><rect x="87.8" y="76.4" width="3.5" height="11.6" fill="#2e2a26"/><rect x="91.3" y="78.3" width="1.5" height="9.7" fill="#9c9488"/><rect x="92.8" y="77.5" width="3.5" height="10.5" fill="#9c9488"/><rect x="96.3" y="80.0" width="3" height="8.0" fill="#e8e4dc"/><rect x="99.3" y="77.9" width="1.5" height="10.1" fill="#8a8070"/><rect x="100.8" y="77.1" width="3" height="10.9" fill="#e8e4dc"/><rect x="103.8" y="79.7" width="3.5" height="8.3" fill="#6e6a62"/><rect x="107.3" y="77.9" width="6.387312918026243" height="10.1" fill="#a8a49c"/><rect x="113.7" y="80.5" width="3.5" height="7.5" fill="#6e6a62"/><rect x="117.2" y="79.2" width="5.984417969172417" height="8.8" fill="#a8a49c"/><rect x="123.1" y="78.4" width="2.5" height="9.6" fill="#7a6e60"/><rect x="125.6" y="80.5" width="1.5" height="7.5" fill="#cfc8b8"/><rect x="127.1" y="78.0" width="3" height="10.0" fill="#7a6e60"/><rect x="130.1" y="80.5" width="5.257420147050903" height="7.5" fill="#a8a49c"/><rect x="135.4" y="77.3" width="3" height="10.7" fill="#e8e4dc"/><rect x="138.4" y="78.4" width="3" height="9.6" fill="#4a4038"/><rect x="141.4" y="79.0" width="2" height="9.0" fill="#8a8070"/><rect x="143.4" y="77.6" width="3.5" height="10.4" fill="#3c3834"/><rect x="146.9" y="79.3" width="1.5" height="8.7" fill="#6e6a62"/><rect x="148.4" y="77.4" width="2" height="10.6" fill="#f0efe9"/><rect x="150.4" y="76.1" width="3" height="11.9" fill="#cfc8b8"/><rect x="153.4" y="77.2" width="5.639425036015698" height="10.8" fill="#a8a49c"/><rect x="159.0" y="80.1" width="3" height="7.9" fill="#b8b0a0"/><rect x="162.0" y="78.8" width="2.5" height="9.2" fill="#e6e2d6"/><rect x="164.5" y="76.0" width="3.5" height="12.0" fill="#e8e4dc"/><rect x="0" y="74" width="166" height="2" fill="#e9e8e2"/><rect x="0.0" y="94.0" width="3" height="9.0" fill="#5a5248"/><rect x="3.0" y="93.0" width="2" height="10.0" fill="#e6e2d6"/><rect x="5.0" y="93.6" width="2" height="9.4" fill="#3c3834"/><rect x="7.0" y="93.1" width="2" height="9.9" fill="#4a4038"/><rect x="9.0" y="93.4" width="3.5" height="9.6" fill="#7a6e60"/><rect x="12.5" y="90.4" width="3" height="12.6" fill="#cfc8b8"/><rect x="15.5" y="90.3" width="2.5" height="12.7" fill="#8a8070"/><rect x="18.0" y="94.1" width="1.5" height="8.9" fill="#2e2a26"/><rect x="19.5" y="91.0" width="3" height="12.0" fill="#6e6a62"/><rect x="22.5" y="92.1" width="2" height="10.9" fill="#e8e4dc"/><rect x="24.5" y="92.7" width="2.5" height="10.3" fill="#4a4038"/><rect x="27.0" y="94.1" width="2.5" height="8.9" fill="#b8b0a0"/><rect x="29.5" y="91.6" width="1.5" height="11.4" fill="#2e2a26"/><rect x="31.0" y="95.1" width="3" height="7.9" fill="#cfc8b8"/><rect x="34.0" y="93.2" width="3" height="9.8" fill="#4a4038"/><rect x="37.0" y="94.7" width="2" height="8.3" fill="#f0efe9"/><rect x="39.0" y="94.5" width="2" height="8.5" fill="#8a8070"/><rect x="41.0" y="95.1" width="1.5" height="7.9" fill="#2e2a26"/><rect x="42.5" y="94.8" width="2.5" height="8.2" fill="#b8b0a0"/><rect x="45.0" y="91.7" width="3" height="11.3" fill="#5a5248"/><rect x="48.0" y="92.7" width="2" height="10.3" fill="#8a8070"/><rect x="50.0" y="94.5" width="3" height="8.5" fill="#8a8070"/><rect x="53.0" y="92.7" width="2.5" height="10.3" fill="#7a6e60"/><rect x="55.5" y="92.3" width="3.5" height="10.7" fill="#2e2a26"/><rect x="59.0" y="93.2" width="3.5" height="9.8" fill="#8a8070"/><rect x="62.5" y="91.5" width="3" height="11.5" fill="#b8b0a0"/><rect x="65.5" y="90.7" width="3" height="12.3" fill="#8a8070"/><rect x="68.5" y="93.4" width="2" height="9.6" fill="#8a8070"/><rect x="70.5" y="91.3" width="1.5" height="11.7" fill="#6e6a62"/><rect x="72.0" y="93.6" width="7.411799765116138" height="9.4" fill="#a8a49c"/><rect x="79.4" y="91.6" width="3" height="11.4" fill="#4a4038"/><rect x="82.4" y="94.0" width="2" height="9.0" fill="#4a4038"/><rect x="84.4" y="94.6" width="5.533424285968391" height="8.4" fill="#a8a49c"/><rect x="89.9" y="93.7" width="2" height="9.3" fill="#7a6e60"/><rect x="91.9" y="90.4" width="2" height="12.6" fill="#8a8070"/><rect x="93.9" y="93.4" width="2" height="9.6" fill="#7a6e60"/><rect x="95.9" y="91.3" width="1.5" height="11.7" fill="#b8b0a0"/><rect x="97.4" y="92.2" width="2.5" height="10.8" fill="#7a6e60"/><rect x="99.9" y="91.6" width="2" height="11.4" fill="#f0efe9"/><rect x="101.9" y="93.3" width="1.5" height="9.7" fill="#e6e2d6"/><rect x="103.4" y="94.9" width="2" height="8.1" fill="#6e6a62"/><rect x="105.4" y="92.8" width="2" height="10.2" fill="#2e2a26"/><rect x="107.4" y="95.1" width="1.5" height="7.9" fill="#2e2a26"/><rect x="108.9" y="92.3" width="2" height="10.7" fill="#5a5248"/><rect x="110.9" y="91.9" width="2" height="11.1" fill="#b8b0a0"/><rect x="112.9" y="95.0" width="2" height="8.0" fill="#7a6e60"/><rect x="114.9" y="91.9" width="1.5" height="11.1" fill="#3c3834"/><rect x="116.4" y="93.0" width="5.855864402047554" height="10.0" fill="#a8a49c"/><rect x="122.3" y="93.2" width="4.543396046263744" height="9.8" fill="#a8a49c"/><rect x="126.8" y="93.8" width="3" height="9.2" fill="#6e6a62"/><rect x="129.8" y="94.4" width="1.5" height="8.6" fill="#8a8070"/><rect x="131.3" y="91.7" width="2" height="11.3" fill="#8a8070"/><rect x="133.3" y="90.1" width="3" height="12.9" fill="#f0efe9"/><rect x="136.3" y="90.8" width="2.5" height="12.2" fill="#e8e4dc"/><rect x="138.8" y="90.9" width="3" height="12.1" fill="#5e6a70"/><rect x="141.8" y="93.8" width="2" height="9.2" fill="#e6e2d6"/><rect x="143.8" y="91.0" width="2" height="12.0" fill="#8a8070"/><rect x="145.8" y="94.4" width="3.5" height="8.6" fill="#8a8070"/><rect x="149.3" y="93.5" width="2" height="9.5" fill="#7a6e60"/><rect x="151.3" y="93.7" width="3" height="9.3" fill="#b8b0a0"/><rect x="154.3" y="91.7" width="3.5" height="11.3" fill="#6e6a62"/><rect x="157.8" y="93.3" width="2" height="9.7" fill="#7a6e60"/><rect x="159.8" y="91.4" width="3" height="11.6" fill="#e6e2d6"/><rect x="162.8" y="90.6" width="1.5" height="12.4" fill="#5a5248"/><rect x="164.3" y="92.5" width="2.5" height="10.5" fill="#4a4038"/><rect x="0" y="88" width="166" height="2" fill="#e9e8e2"/><rect x="0.0" y="107.0" width="2" height="11.0" fill="#b8b0a0"/><rect x="2.0" y="108.4" width="1.5" height="9.6" fill="#b8b0a0"/><rect x="3.5" y="108.2" width="3.5" height="9.8" fill="#7a6e60"/><rect x="7.0" y="106.5" width="2" height="11.5" fill="#2e2a26"/><rect x="9.0" y="105.8" width="2" height="12.2" fill="#5e6a70"/><rect x="11.0" y="106.9" width="2.5" height="11.1" fill="#cfc8b8"/><rect x="13.5" y="106.0" width="2" height="12.0" fill="#cfc8b8"/><rect x="15.5" y="106.7" width="3" height="11.3" fill="#8a8070"/><rect x="18.5" y="107.7" width="1.5" height="10.3" fill="#7a6e60"/><rect x="20.0" y="108.8" width="2" height="9.2" fill="#5a5248"/><rect x="22.0" y="106.7" width="3.5" height="11.3" fill="#b8b0a0"/><rect x="25.5" y="109.9" width="2" height="8.1" fill="#7a6e60"/><rect x="27.5" y="109.2" width="1.5" height="8.8" fill="#2e2a26"/><rect x="29.0" y="108.1" width="1.5" height="9.9" fill="#f0efe9"/><rect x="30.5" y="109.3" width="2.5" height="8.7" fill="#e6e2d6"/><rect x="33.0" y="108.7" width="3.5" height="9.3" fill="#b8b0a0"/><rect x="36.5" y="106.2" width="2.5" height="11.8" fill="#3c3834"/><rect x="39.0" y="109.1" width="3.5" height="8.9" fill="#5a5248"/><rect x="42.5" y="107.9" width="2" height="10.1" fill="#5e6a70"/><rect x="44.5" y="105.6" width="2" height="12.4" fill="#b8b0a0"/><rect x="46.5" y="105.6" width="2" height="12.4" fill="#5a5248"/><rect x="48.5" y="108.8" width="2" height="9.2" fill="#b8b0a0"/><rect x="50.5" y="109.8" width="2" height="8.2" fill="#8a8070"/><rect x="52.5" y="107.3" width="7.570585809964104" height="10.7" fill="#a8a49c"/><rect x="60.1" y="106.7" width="2" height="11.3" fill="#f0efe9"/><rect x="62.1" y="109.5" width="2.5" height="8.5" fill="#e8e4dc"/><rect x="64.6" y="107.7" width="2.5" height="10.3" fill="#b8b0a0"/><rect x="67.1" y="108.1" width="3" height="9.9" fill="#f0efe9"/><rect x="70.1" y="106.8" width="3" height="11.2" fill="#3c3834"/><rect x="73.1" y="105.3" width="2" height="12.7" fill="#5e6a70"/><rect x="75.1" y="107.2" width="7.429092408024655" height="10.8" fill="#a8a49c"/><rect x="82.5" y="107.4" width="5.435711116313676" height="10.6" fill="#a8a49c"/><rect x="87.9" y="108.6" width="3" height="9.4" fill="#9c9488"/><rect x="90.9" y="109.9" width="6.109009959248747" height="8.1" fill="#a8a49c"/><rect x="97.0" y="106.1" width="2" height="11.9" fill="#7a6e60"/><rect x="99.0" y="106.0" width="2" height="12.0" fill="#5e6a70"/><rect x="101.0" y="105.3" width="1.5" height="12.7" fill="#6e6a62"/><rect x="102.5" y="108.1" width="6.307245556735451" height="9.9" fill="#a8a49c"/><rect x="108.9" y="108.5" width="2" height="9.5" fill="#7a6e60"/><rect x="110.9" y="108.8" width="3.5" height="9.2" fill="#2e2a26"/><rect x="114.4" y="108.4" width="6.613285253096388" height="9.6" fill="#a8a49c"/><rect x="121.0" y="109.7" width="3" height="8.3" fill="#2e2a26"/><rect x="124.0" y="109.1" width="2" height="8.9" fill="#7a6e60"/><rect x="126.0" y="106.7" width="2" height="11.3" fill="#cfc8b8"/><rect x="128.0" y="109.5" width="2" height="8.5" fill="#2e2a26"/><rect x="130.0" y="110.2" width="4.378952095553232" height="7.8" fill="#a8a49c"/><rect x="134.3" y="105.8" width="3" height="12.2" fill="#e8e4dc"/><rect x="137.3" y="108.5" width="2" height="9.5" fill="#e8e4dc"/><rect x="139.3" y="105.1" width="3" height="12.9" fill="#b8b0a0"/><rect x="142.3" y="107.6" width="2" height="10.4" fill="#e8e4dc"/><rect x="144.3" y="106.0" width="2" height="12.0" fill="#e6e2d6"/><rect x="146.3" y="105.6" width="2" height="12.4" fill="#e8e4dc"/><rect x="148.3" y="109.4" width="1.5" height="8.6" fill="#4a4038"/><rect x="149.8" y="109.9" width="3.5" height="8.1" fill="#3c3834"/><rect x="153.3" y="105.7" width="2.5" height="12.3" fill="#4a4038"/><rect x="155.8" y="105.4" width="3" height="12.6" fill="#e6e2d6"/><rect x="158.8" y="106.3" width="3.5" height="11.7" fill="#b8b0a0"/><rect x="162.3" y="105.8" width="2.5" height="12.2" fill="#9c9488"/><rect x="164.8" y="107.4" width="3" height="10.6" fill="#f0efe9"/><rect x="0" y="103" width="166" height="2" fill="#e9e8e2"/><rect x="6" y="0" width="2.5" height="139" fill="#e6e5e0"/><rect x="43" y="0" width="2.5" height="139" fill="#e6e5e0"/><rect x="66" y="0" width="2.5" height="139" fill="#e6e5e0"/><rect x="101" y="0" width="2.5" height="139" fill="#e6e5e0"/><rect x="136" y="0" width="2.5" height="139" fill="#e6e5e0"/><rect x="161" y="0" width="2.5" height="139" fill="#e6e5e0"/><rect x="17" y="0" width="2.5" height="120" fill="#f4f4f0"/><rect x="41" y="0" width="2.5" height="120" fill="#f4f4f0"/><rect x="17" y="6" width="26" height="1.8" fill="#f4f4f0"/><rect x="17" y="19" width="26" height="1.8" fill="#f4f4f0"/><rect x="17" y="32" width="26" height="1.8" fill="#f4f4f0"/><rect x="17" y="45" width="26" height="1.8" fill="#f4f4f0"/><rect x="17" y="58" width="26" height="1.8" fill="#f4f4f0"/><rect x="17" y="71" width="26" height="1.8" fill="#f4f4f0"/><rect x="17" y="84" width="26" height="1.8" fill="#f4f4f0"/><rect x="17" y="97" width="26" height="1.8" fill="#f4f4f0"/><rect x="17" y="110" width="26" height="1.8" fill="#f4f4f0"/></svg>
  <div class="a" style="left:0;top:112px;width:60px;height:30px;background:#3e3a34"></div>
  <div class="a" style="left:40px;top:100px;width:110px;height:45px;border-radius:30px 30px 0 0;background:#1d2226"></div>
  <div class="a" style="left:112px;top:62px;width:58px;height:80px;border-radius:30px 0 0 0;background:linear-gradient(160deg,#5ea9b5,#3c8894 60%,#2f7380)"></div>
  <div class="a" style="left:66px;top:110px;width:34px;height:30px;background:#5a9fad"></div>
  <div class="a" style="left:75px;top:46px;width:48px;height:68px;border-radius:46%;background:radial-gradient(ellipse at 50% 55%,#d9bcb0 0,#cdaa9a 55%,#a98a7c 100%)"></div>
  <div class="a" style="left:100px;top:44px;width:34px;height:28px;border-radius:50%;background:#ddd3cc"></div>
  <div class="a" style="left:117px;top:60px;width:24px;height:30px;border-radius:40%;background:#d8cbc2;transform:rotate(-30deg)"></div>
  </div>
  <div class="a" style="left:77px;top:68px;width:18px;height:9px;border-radius:4px;border:1px solid rgba(90,90,100,.5);background:rgba(200,205,215,.2)"></div><div class="a" style="left:97px;top:68px;width:18px;height:9px;border-radius:4px;border:1px solid rgba(90,90,100,.5);background:rgba(200,205,215,.2)"></div>
 </div>
 <div class="a" style="left:129px;top:13px;width:24px;height:24px;border-radius:50%;background:#1a73e8">
  <div class="a" style="left:6px;top:10px;width:3px;height:4px;border-radius:2px;background:#fff"></div>
  <div class="a" style="left:10.5px;top:6px;width:3px;height:12px;border-radius:2px;background:#fff"></div>
  <div class="a" style="left:15px;top:10px;width:3px;height:4px;border-radius:2px;background:#fff"></div>
 </div>
 <div class="tname">Lajos Szilágyi</div>
</div>

<div class="a tile" style="left:1006px;top:237px;height:138px">
 <div class="a" style="left:40px;top:0;width:85px;height:138px;overflow:hidden;background:#dcd8d0">
  <div class="a" style="left:-3px;top:-3px;width:91px;height:144px;filter:blur(0.9px)">
  <div class="a" style="left:0;top:60px;width:91px;height:84px;background:linear-gradient(90deg,#d9d4cc,#c9c3ba 70%,#b3aca2)"></div>
  <div class="a" style="left:75px;top:0;width:16px;height:144px;background:#5e4a3e"></div>
  <div class="a" style="left:30px;top:6px;width:48px;height:54px;background:#3b2e27"></div>
  <div class="a" style="left:36px;top:12px;width:36px;height:40px;background:radial-gradient(ellipse at 55% 50%,#c8473a 0,#bf5548 30%,#7d8fb0 65%,#4e6288 100%)"></div>
  <div class="a" style="left:0;top:13px;width:17px;height:26px;background:#8b6a45"></div>
  <div class="a" style="left:0;top:108px;width:91px;height:36px;border-radius:25px 25px 0 0;background:#7d6ca3"></div>
  <div class="a" style="left:5px;top:42px;width:60px;height:42px;border-radius:50% 50% 20% 20%;background:#655c55"></div>
  <div class="a" style="left:8px;top:55px;width:53px;height:68px;border-radius:46%;background:radial-gradient(ellipse at 50% 45%,#d7b8aa 0,#c9a292 60%,#a47f70 100%)"></div>
  <div class="a" style="left:26px;top:96px;width:28px;height:6px;border-radius:3px;background:#6e5850"></div>
  <div class="a" style="left:17px;top:75px;width:14px;height:4px;border-radius:2px;background:#8a6a5c"></div>
  <div class="a" style="left:38px;top:75px;width:14px;height:4px;border-radius:2px;background:#8a6a5c"></div>
  <div class="a" style="left:33px;top:78px;width:6px;height:18px;border-radius:3px;background:#d8b4a4"></div>
  </div>
 </div>
 <div class="mute"><svg viewBox="0 0 24 24"><path fill="#fff" d="M19 11h-1.7c0 .74-.16 1.43-.43 2.05l1.23 1.23c.56-.98.9-2.09.9-3.28zm-4.02.17c0-.06.02-.11.02-.17V5c0-1.66-1.34-3-3-3S9 3.34 9 5v.18l5.98 5.99zM4.27 3L3 4.27l6.01 6.01V11c0 1.66 1.33 3 2.99 3 .22 0 .44-.03.65-.08l1.66 1.66c-.71.33-1.5.52-2.31.52-2.76 0-5.3-2.1-5.3-5.1H5c0 3.41 2.72 6.23 6 6.72V21h2v-3.28c.91-.13 1.77-.45 2.54-.9L19.73 21 21 19.73 4.27 3z"/></svg></div>
 <div class="tname" style="top:109px">Sandor Tilistyak</div>
</div>

<div class="a tile" style="left:1184px;top:237px;height:138px">
 <div class="mute"><svg viewBox="0 0 24 24"><path fill="#fff" d="M19 11h-1.7c0 .74-.16 1.43-.43 2.05l1.23 1.23c.56-.98.9-2.09.9-3.28zm-4.02.17c0-.06.02-.11.02-.17V5c0-1.66-1.34-3-3-3S9 3.34 9 5v.18l5.98 5.99zM4.27 3L3 4.27l6.01 6.01V11c0 1.66 1.33 3 2.99 3 .22 0 .44-.03.65-.08l1.66 1.66c-.71.33-1.5.52-2.31.52-2.76 0-5.3-2.1-5.3-5.1H5c0 3.41 2.72 6.23 6 6.72V21h2v-3.28c.91-.13 1.77-.45 2.54-.9L19.73 21 21 19.73 4.27 3z"/></svg></div>
 <div class="av" style="background:#5d4037;top:44px">Y</div>
 <div class="tname" style="top:109px">Yurij Rakchejev</div>
</div>

<div class="a tile" style="left:1006px;top:387px;height:139px">
 <div class="mute"><svg viewBox="0 0 24 24"><path fill="#fff" d="M19 11h-1.7c0 .74-.16 1.43-.43 2.05l1.23 1.23c.56-.98.9-2.09.9-3.28zm-4.02.17c0-.06.02-.11.02-.17V5c0-1.66-1.34-3-3-3S9 3.34 9 5v.18l5.98 5.99zM4.27 3L3 4.27l6.01 6.01V11c0 1.66 1.33 3 2.99 3 .22 0 .44-.03.65-.08l1.66 1.66c-.71.33-1.5.52-2.31.52-2.76 0-5.3-2.1-5.3-5.1H5c0 3.41 2.72 6.23 6 6.72V21h2v-3.28c.91-.13 1.77-.45 2.54-.9L19.73 21 21 19.73 4.27 3z"/></svg></div>
 <div class="av" style="background:#f4511e;top:45px">Cs</div>
 <div class="tname">Csaba Kudlotyák</div>
</div>

<div class="a tile" style="left:1184px;top:387px;height:139px">
 <div class="mute"><svg viewBox="0 0 24 24"><path fill="#fff" d="M19 11h-1.7c0 .74-.16 1.43-.43 2.05l1.23 1.23c.56-.98.9-2.09.9-3.28zm-4.02.17c0-.06.02-.11.02-.17V5c0-1.66-1.34-3-3-3S9 3.34 9 5v.18l5.98 5.99zM4.27 3L3 4.27l6.01 6.01V11c0 1.66 1.33 3 2.99 3 .22 0 .44-.03.65-.08l1.66 1.66c-.71.33-1.5.52-2.31.52-2.76 0-5.3-2.1-5.3-5.1H5c0 3.41 2.72 6.23 6 6.72V21h2v-3.28c.91-.13 1.77-.45 2.54-.9L19.73 21 21 19.73 4.27 3z"/></svg></div>
 <div class="av" style="background:linear-gradient(90deg,#e2e2ea 0,#e6e6ee 50%,#cdd6ea 100%);top:45px;overflow:hidden">
  <div class="a" style="left:-2px;top:-2px;width:54px;height:54px;filter:blur(0.6px)">
  <div class="a" style="left:32px;top:3px;width:20px;height:14px;border-radius:50%;background:#c9ab82"></div>
  <div class="a" style="left:17px;top:41px;width:23px;height:13px;background:#e9ebe6"></div>
  <div class="a" style="left:0;top:45px;width:19px;height:9px;background:#272a30"></div>
  <div class="a" style="left:38px;top:45px;width:16px;height:9px;background:#272a30"></div>
  <div class="a" style="left:25px;top:46px;width:6px;height:8px;background:#a3a898"></div>
  <div class="a" style="left:19px;top:33px;width:17px;height:10px;background:#c19d8d"></div>
  <div class="a" style="left:7px;top:21px;width:5px;height:10px;border-radius:50%;background:#c49e8e"></div>
  <div class="a" style="left:38px;top:21px;width:5px;height:10px;border-radius:50%;background:#c49e8e"></div>
  <div class="a" style="left:10px;top:8px;width:30px;height:31px;border-radius:45%;background:radial-gradient(ellipse at 50% 50%,#d2ada0 0,#c6a090 70%,#b58e7e 100%)"></div>
  <div class="a" style="left:10px;top:3px;width:32px;height:11px;border-radius:16px 16px 4px 4px;background:#3d2e26"></div>
  <div class="a" style="left:10px;top:8px;width:4px;height:14px;border-radius:3px;background:#3d2e26"></div>
  <div class="a" style="left:38px;top:8px;width:4px;height:13px;border-radius:3px;background:#3d2e26"></div>
  </div>
 </div>
 <div class="tname">Pál Makó</div>
</div>

<div class="a tile" style="left:1006px;top:538px;height:139px">
 <div class="mute"><svg viewBox="0 0 24 24"><path fill="#fff" d="M19 11h-1.7c0 .74-.16 1.43-.43 2.05l1.23 1.23c.56-.98.9-2.09.9-3.28zm-4.02.17c0-.06.02-.11.02-.17V5c0-1.66-1.34-3-3-3S9 3.34 9 5v.18l5.98 5.99zM4.27 3L3 4.27l6.01 6.01V11c0 1.66 1.33 3 2.99 3 .22 0 .44-.03.65-.08l1.66 1.66c-.71.33-1.5.52-2.31.52-2.76 0-5.3-2.1-5.3-5.1H5c0 3.41 2.72 6.23 6 6.72V21h2v-3.28c.91-.13 1.77-.45 2.54-.9L19.73 21 21 19.73 4.27 3z"/></svg></div>
 <div class="av" style="background:#c2185b;top:45px">A</div>
 <div class="tname">Alexandra Palinszky</div>
</div>

<div class="a tile" style="left:1184px;top:538px;height:139px">
 <div class="a" style="left:0;top:22px;width:166px;height:94px;overflow:hidden;background:#d0c9be">
  <div class="a" style="left:-4px;top:-4px;width:174px;height:102px;filter:blur(1.5px)">
  <div class="a" style="left:0;top:0;width:174px;height:102px;background:linear-gradient(90deg,#c2bbb2 0,#cdc6bc 25%,#d8d0c6 50%,#e2dbd2 70%,#ddd4c6 85%,#d6c6ae 100%)"></div>
  <div class="a" style="left:10px;top:10px;width:30px;height:25px;border-radius:50%;background:#bfb9b1"></div>
  <div class="a" style="left:50px;top:15px;width:25px;height:20px;border-radius:50%;background:#c9c2b9"></div>
  <div class="a" style="left:105px;top:8px;width:22px;height:75px;border-radius:40%;background:linear-gradient(180deg,#cf9a78,#c48a64 60%,#d8cfc4)"></div>
  <div class="a" style="left:125px;top:30px;width:20px;height:55px;border-radius:40%;background:#e6e2dc"></div>
  <div class="a" style="left:135px;top:50px;width:40px;height:30px;background:#dcc2a2"></div>
  <div class="a" style="left:0;top:80px;width:174px;height:22px;background:linear-gradient(180deg,#7a2c2a,#5c1f1e)"></div>
  <div class="a" style="left:37px;top:78px;width:98px;height:26px;border-radius:22px 22px 0 0;background:#6a1c1e"></div>
  <div class="a" style="left:62px;top:31px;width:36px;height:52px;border-radius:46%;background:radial-gradient(ellipse at 50% 55%,#cfa292 0,#bd8a7a 60%,#946a5c 100%)"></div>
  <div class="a" style="left:59px;top:27px;width:42px;height:22px;border-radius:20px 20px 5px 5px;background:#2a211f"></div>
  <div class="a" style="left:59px;top:35px;width:6px;height:22px;border-radius:3px;background:#2a211f"></div>
  </div>
 </div>
 <div class="mute"><svg viewBox="0 0 24 24"><path fill="#fff" d="M19 11h-1.7c0 .74-.16 1.43-.43 2.05l1.23 1.23c.56-.98.9-2.09.9-3.28zm-4.02.17c0-.06.02-.11.02-.17V5c0-1.66-1.34-3-3-3S9 3.34 9 5v.18l5.98 5.99zM4.27 3L3 4.27l6.01 6.01V11c0 1.66 1.33 3 2.99 3 .22 0 .44-.03.65-.08l1.66 1.66c-.71.33-1.5.52-2.31.52-2.76 0-5.3-2.1-5.3-5.1H5c0 3.41 2.72 6.23 6 6.72V21h2v-3.28c.91-.13 1.77-.45 2.54-.9L19.73 21 21 19.73 4.27 3z"/></svg></div>
 <div class="tname">Lénárd Simon</div>
</div>

<!-- bottom bar -->
<div class="a" style="left:24px;top:719px;color:#e8eaed;-webkit-text-stroke:0.35px #e8eaed;font-size:16px;line-height:18px;white-space:nowrap">20:29</div>
<div class="a" style="left:78px;top:720px;width:1px;height:16px;background:#c4c7c5"></div>
<div class="a" style="left:91px;top:719px;color:#e8eaed;-webkit-text-stroke:0.35px #e8eaed;font-size:16.3px;line-height:18px;white-space:nowrap">OPP megbeszélés</div>

<div class="mbtn" style="left:473px;background:#ea4335"><svg viewBox="0 0 24 24"><path fill="#fff" d="M19 11h-1.7c0 .74-.16 1.43-.43 2.05l1.23 1.23c.56-.98.9-2.09.9-3.28zm-4.02.17c0-.06.02-.11.02-.17V5c0-1.66-1.34-3-3-3S9 3.34 9 5v.18l5.98 5.99zM4.27 3L3 4.27l6.01 6.01V11c0 1.66 1.33 3 2.99 3 .22 0 .44-.03.65-.08l1.66 1.66c-.71.33-1.5.52-2.31.52-2.76 0-5.3-2.1-5.3-5.1H5c0 3.41 2.72 6.23 6 6.72V21h2v-3.28c.91-.13 1.77-.45 2.54-.9L19.73 21 21 19.73 4.27 3z"/></svg></div>
<div class="mbtn" style="left:525px"><svg viewBox="0 0 24 24"><path fill="#fff" d="M15 8v8H5V8h10m1-2H4c-.55 0-1 .45-1 1v10c0 .55.45 1 1 1h12c.55 0 1-.45 1-1v-3.5l4 4v-11l-4 4V7c0-.55-.45-1-1-1z"/></svg></div>
<div class="mbtn" style="left:577px"><svg viewBox="0 0 24 24"><path fill="#fff" d="M19 4H5c-1.11 0-2 .9-2 2v12c0 1.1.89 2 2 2h14c1.1 0 2-.9 2-2V6c0-1.1-.9-2-2-2zm0 14H5V6h14v12zM7 15h3c.55 0 1-.45 1-1v-1H9.5v.5h-2v-3h2v.5H11v-1c0-.55-.45-1-1-1H7c-.55 0-1 .45-1 1v4c0 .55.45 1 1 1zm7 0h3c.55 0 1-.45 1-1v-1h-1.5v.5h-2v-3h2v.5H18v-1c0-.55-.45-1-1-1h-3c-.55 0-1 .45-1 1v4c0 .55.45 1 1 1z"/></svg></div>
<div class="mbtn" style="left:629px"><svg viewBox="0 0 24 24"><path fill="#fff" d="M11.99 2C6.47 2 2 6.48 2 12s4.47 10 9.99 10C17.52 22 22 17.52 22 12S17.52 2 11.99 2zM12 20c-4.42 0-8-3.58-8-8s3.58-8 8-8 8 3.580 8 8-3.58 8-8 8zm3.5-9c.83 0 1.5-.67 1.5-1.5S16.33 8 15.5 8 14 8.67 14 9.5s.67 1.5 1.5 1.5zm-7 0c.83 0 1.5-.67 1.5-1.5S9.33 8 8.5 8 7 8.67 7 9.5 7.67 11 8.5 11zm3.5 6.5c2.33 0 4.31-1.46 5.11-3.5H6.89c.8 2.04 2.78 3.5 5.11 3.5z"/></svg></div>
<div class="mbtn" style="left:681px"><svg viewBox="0 0 24 24"><path fill="#fff" d="M21 3H3c-1.11 0-2 .89-2 2v14c0 1.11.89 2 2 2h18c1.11 0 2-.89 2-2V5c0-1.11-.89-2-2-2zm0 16.02H3V4.98h18v14.04zM10 12H8l4-4 4 4h-2v4h-4v-4z"/></svg></div>
<div class="mbtn" style="left:733px"><svg viewBox="0 0 24 24"><path fill="none" stroke="#fff" stroke-width="1.9" stroke-linejoin="round" d="M9 12V4.2a1.2 1.2 0 0 1 2.4 0V11 M11.4 11V3a1.2 1.2 0 0 1 2.4 0v8 M13.8 11V4a1.2 1.2 0 0 1 2.4 0v7.5 M16.2 11.5V6.5a1.2 1.2 0 0 1 2.4 0V14c0 4.5-3 7.5-6.5 7.5-2.5 0-4.3-1.2-5.5-3.5L4.5 13.2a1.1 1.1 0 0 1 1.9-1.1L9 15.2V12"/></svg></div>
<div class="mbtn" style="left:785px"><svg viewBox="0 0 24 24"><path fill="#fff" d="M12 8c1.1 0 2-.9 2-2s-.9-2-2-2-2 .9-2 2 .9 2 2 2zm0 2c-1.1 0-2 .9-2 2s.9 2 2 2 2-.9 2-2-.9-2-2-2zm0 6c-1.1 0-2 .9-2 2s.9 2 2 2 2-.9 2-2-.9-2-2-2z"/></svg></div>
<div class="mbtn" style="left:837px;width:56px;background:#ea4335"><svg style="left:14px;top:7px;width:28px;height:28px" viewBox="0 0 24 24"><path fill="#fff" d="M12 9c-1.6 0-3.15.25-4.6.72v3.1c0 .39-.23.74-.56.9-.98.49-1.87 1.12-2.66 1.85-.18.18-.43.28-.7.28-.28 0-.53-.11-.71-.29L.29 13.08c-.18-.17-.29-.42-.29-.7 0-.28.11-.53.29-.71C3.34 8.78 7.46 7 12 7s8.66 1.78 11.71 4.67c.18.18.29.43.29.71 0 .28-.11.53-.29.71l-2.48 2.48c-.18.18-.43.29-.71.29-.27 0-.52-.11-.7-.28-.79-.74-1.69-1.36-2.67-1.85-.33-.16-.56-.5-.56-.9v-3.1C15.15 9.25 13.6 9 12 9z"/></svg></div>

<svg class="ricon" style="left:1126px" viewBox="0 0 24 24"><path fill="#fff" d="M11 7h2v2h-2zm0 4h2v6h-2zm1-9C6.48 2 2 6.48 2 12s4.48 10 10 10 10-4.48 10-10S17.52 2 12 2zm0 18c-4.41 0-8-3.59-8-8s3.59-8 8-8 8 3.59 8 8-3.59 8-8 8z"/></svg>
<svg class="ricon" style="left:1174px" viewBox="0 0 24 24"><path fill="#fff" d="M9 13.75c-2.34 0-7 1.17-7 3.5V19h14v-1.75c0-2.33-4.66-3.5-7-3.5zM4.34 17c.84-.58 2.87-1.25 4.66-1.25s3.82.67 4.66 1.25H4.34zM9 12c1.93 0 3.5-1.57 3.5-3.5S10.93 5 9 5 5.5 6.57 5.5 8.5 7.07 12 9 12zm0-5c.83 0 1.5.67 1.5 1.5S9.830 10 9 10s-1.5-.67-1.5-1.5S8.17 7 9 7zm7.04 6.81c1.16.84 1.96 1.96 1.96 3.44V19h4v-1.75c0-2.02-3.5-3.17-5.96-3.44zM15 12c1.93 0 3.5-1.57 3.5-3.5S16.93 5 15 5c-.54 0-1.04.13-1.5.35.63.89 1 1.98 1 3.15s-.37 2.26-1 3.15c.46.22.96.35 1.5.35z"/></svg>
<div class="a" style="left:1187px;top:695px;width:20px;height:20px;border-radius:50%;background:#5f6368;color:#fff;font-size:11px;font-weight:bold;text-align:center;line-height:20px">9</div>
<svg class="ricon" style="left:1222px" viewBox="0 0 24 24"><path fill="#fff" d="M20 2H4c-1.1 0-1.99.9-1.99 2L2 22l4-4h14c1.1 0 2-.9 2-2V4c0-1.1-.9-2-2-2zm0 14H5.17L4 17.17V4h16v12zM6 12h8v2H6zm0-3h12v2H6zm0-3h12v2H6z"/></svg>
<svg class="ricon" style="left:1270px" viewBox="0 0 24 24"><path fill="none" stroke="#fff" stroke-width="2" d="M12 3.5l4 6.5H8z M4 14h6v6H4z"/><circle cx="17" cy="17" r="3.2" fill="none" stroke="#fff" stroke-width="2"/></svg>
<svg class="ricon" style="left:1319px" viewBox="0 0 24 24"><path fill="none" stroke="#fff" stroke-width="2" d="M8 9V6.5a4 4 0 0 1 8 0V9 M13 21H5V9h14v4"/><circle cx="18" cy="18" r="4" fill="#fff"/><circle cx="18" cy="16.6" r="1.1" fill="#202124"/><path d="M15.8 20.3a2.4 2.4 0 0 1 4.4 0z" fill="#202124"/></svg>

</body></html>
